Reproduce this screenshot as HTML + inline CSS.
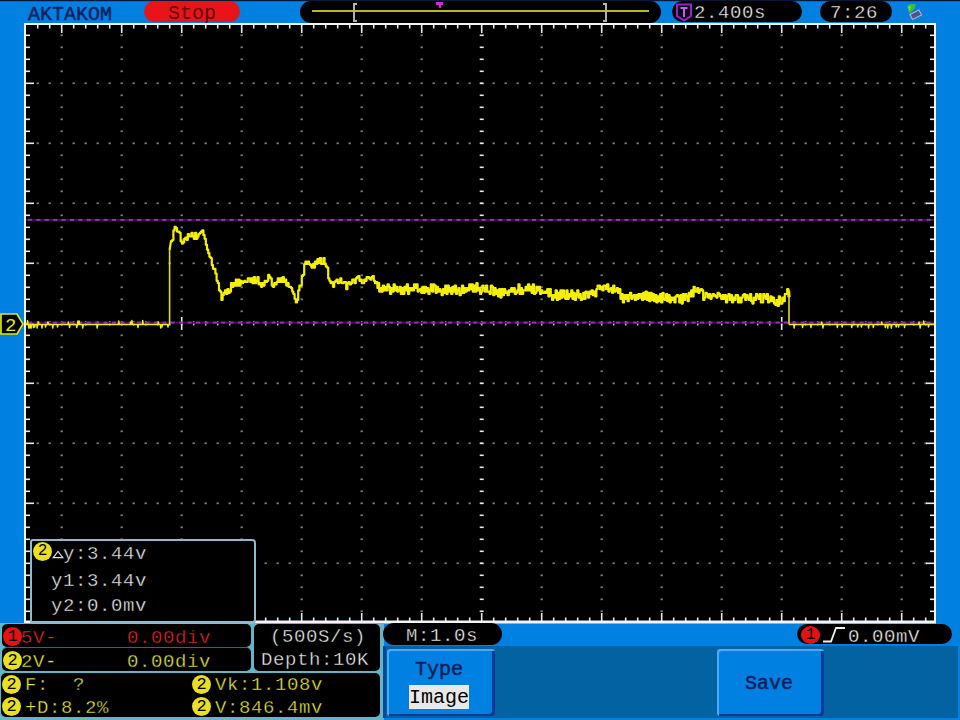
<!DOCTYPE html>
<html><head><meta charset="utf-8"><style>
html,body{margin:0;padding:0}
body{width:960px;height:720px;background:#0080e0;position:relative;overflow:hidden;font-family:"Liberation Mono",monospace;font-size:20px;line-height:1}
.a{position:absolute;white-space:pre}
.t{font-size:19px;letter-spacing:0.6px;-webkit-text-stroke:0.35px #000}
.tb{font-size:20px;letter-spacing:0px;-webkit-text-stroke:0.5px #0a1e5a}
.tr{font-size:20px;letter-spacing:0px}
.tg{font-size:20px;letter-spacing:0px}
.pill{position:absolute;background:#000;border-radius:11px}
</style></head><body>
<svg width="960" height="720" style="position:absolute;left:0;top:0"><rect x="24" y="23" width="912" height="600" fill="#000"/><rect x="36.5" y="82.4" width="2.4" height="1.8" fill="#787878"/><rect x="48.5" y="82.4" width="2.4" height="1.8" fill="#787878"/><rect x="60.5" y="82.4" width="2.4" height="1.8" fill="#787878"/><rect x="72.5" y="82.4" width="2.4" height="1.8" fill="#787878"/><rect x="84.5" y="82.4" width="2.4" height="1.8" fill="#787878"/><rect x="96.5" y="82.4" width="2.4" height="1.8" fill="#787878"/><rect x="108.5" y="82.4" width="2.4" height="1.8" fill="#787878"/><rect x="120.5" y="82.4" width="2.4" height="1.8" fill="#787878"/><rect x="132.5" y="82.4" width="2.4" height="1.8" fill="#787878"/><rect x="144.5" y="82.4" width="2.4" height="1.8" fill="#787878"/><rect x="156.5" y="82.4" width="2.4" height="1.8" fill="#787878"/><rect x="168.5" y="82.4" width="2.4" height="1.8" fill="#787878"/><rect x="180.5" y="82.4" width="2.4" height="1.8" fill="#787878"/><rect x="192.5" y="82.4" width="2.4" height="1.8" fill="#787878"/><rect x="204.5" y="82.4" width="2.4" height="1.8" fill="#787878"/><rect x="216.5" y="82.4" width="2.4" height="1.8" fill="#787878"/><rect x="228.5" y="82.4" width="2.4" height="1.8" fill="#787878"/><rect x="240.5" y="82.4" width="2.4" height="1.8" fill="#787878"/><rect x="252.5" y="82.4" width="2.4" height="1.8" fill="#787878"/><rect x="264.5" y="82.4" width="2.4" height="1.8" fill="#787878"/><rect x="276.5" y="82.4" width="2.4" height="1.8" fill="#787878"/><rect x="288.5" y="82.4" width="2.4" height="1.8" fill="#787878"/><rect x="300.5" y="82.4" width="2.4" height="1.8" fill="#787878"/><rect x="312.5" y="82.4" width="2.4" height="1.8" fill="#787878"/><rect x="324.5" y="82.4" width="2.4" height="1.8" fill="#787878"/><rect x="336.5" y="82.4" width="2.4" height="1.8" fill="#787878"/><rect x="348.5" y="82.4" width="2.4" height="1.8" fill="#787878"/><rect x="360.5" y="82.4" width="2.4" height="1.8" fill="#787878"/><rect x="372.5" y="82.4" width="2.4" height="1.8" fill="#787878"/><rect x="384.5" y="82.4" width="2.4" height="1.8" fill="#787878"/><rect x="396.5" y="82.4" width="2.4" height="1.8" fill="#787878"/><rect x="408.5" y="82.4" width="2.4" height="1.8" fill="#787878"/><rect x="420.5" y="82.4" width="2.4" height="1.8" fill="#787878"/><rect x="432.5" y="82.4" width="2.4" height="1.8" fill="#787878"/><rect x="444.5" y="82.4" width="2.4" height="1.8" fill="#787878"/><rect x="456.5" y="82.4" width="2.4" height="1.8" fill="#787878"/><rect x="468.5" y="82.4" width="2.4" height="1.8" fill="#787878"/><rect x="480.5" y="82.4" width="2.4" height="1.8" fill="#787878"/><rect x="492.5" y="82.4" width="2.4" height="1.8" fill="#787878"/><rect x="504.5" y="82.4" width="2.4" height="1.8" fill="#787878"/><rect x="516.5" y="82.4" width="2.4" height="1.8" fill="#787878"/><rect x="528.5" y="82.4" width="2.4" height="1.8" fill="#787878"/><rect x="540.5" y="82.4" width="2.4" height="1.8" fill="#787878"/><rect x="552.5" y="82.4" width="2.4" height="1.8" fill="#787878"/><rect x="564.5" y="82.4" width="2.4" height="1.8" fill="#787878"/><rect x="576.5" y="82.4" width="2.4" height="1.8" fill="#787878"/><rect x="588.5" y="82.4" width="2.4" height="1.8" fill="#787878"/><rect x="600.5" y="82.4" width="2.4" height="1.8" fill="#787878"/><rect x="612.5" y="82.4" width="2.4" height="1.8" fill="#787878"/><rect x="624.5" y="82.4" width="2.4" height="1.8" fill="#787878"/><rect x="636.5" y="82.4" width="2.4" height="1.8" fill="#787878"/><rect x="648.5" y="82.4" width="2.4" height="1.8" fill="#787878"/><rect x="660.5" y="82.4" width="2.4" height="1.8" fill="#787878"/><rect x="672.5" y="82.4" width="2.4" height="1.8" fill="#787878"/><rect x="684.5" y="82.4" width="2.4" height="1.8" fill="#787878"/><rect x="696.5" y="82.4" width="2.4" height="1.8" fill="#787878"/><rect x="708.5" y="82.4" width="2.4" height="1.8" fill="#787878"/><rect x="720.5" y="82.4" width="2.4" height="1.8" fill="#787878"/><rect x="732.5" y="82.4" width="2.4" height="1.8" fill="#787878"/><rect x="744.5" y="82.4" width="2.4" height="1.8" fill="#787878"/><rect x="756.5" y="82.4" width="2.4" height="1.8" fill="#787878"/><rect x="768.5" y="82.4" width="2.4" height="1.8" fill="#787878"/><rect x="780.5" y="82.4" width="2.4" height="1.8" fill="#787878"/><rect x="792.5" y="82.4" width="2.4" height="1.8" fill="#787878"/><rect x="804.5" y="82.4" width="2.4" height="1.8" fill="#787878"/><rect x="816.5" y="82.4" width="2.4" height="1.8" fill="#787878"/><rect x="828.5" y="82.4" width="2.4" height="1.8" fill="#787878"/><rect x="840.5" y="82.4" width="2.4" height="1.8" fill="#787878"/><rect x="852.5" y="82.4" width="2.4" height="1.8" fill="#787878"/><rect x="864.5" y="82.4" width="2.4" height="1.8" fill="#787878"/><rect x="876.5" y="82.4" width="2.4" height="1.8" fill="#787878"/><rect x="888.5" y="82.4" width="2.4" height="1.8" fill="#787878"/><rect x="900.5" y="82.4" width="2.4" height="1.8" fill="#787878"/><rect x="912.5" y="82.4" width="2.4" height="1.8" fill="#787878"/><rect x="924.5" y="82.4" width="2.4" height="1.8" fill="#787878"/><rect x="36.5" y="142.4" width="2.4" height="1.8" fill="#787878"/><rect x="48.5" y="142.4" width="2.4" height="1.8" fill="#787878"/><rect x="60.5" y="142.4" width="2.4" height="1.8" fill="#787878"/><rect x="72.5" y="142.4" width="2.4" height="1.8" fill="#787878"/><rect x="84.5" y="142.4" width="2.4" height="1.8" fill="#787878"/><rect x="96.5" y="142.4" width="2.4" height="1.8" fill="#787878"/><rect x="108.5" y="142.4" width="2.4" height="1.8" fill="#787878"/><rect x="120.5" y="142.4" width="2.4" height="1.8" fill="#787878"/><rect x="132.5" y="142.4" width="2.4" height="1.8" fill="#787878"/><rect x="144.5" y="142.4" width="2.4" height="1.8" fill="#787878"/><rect x="156.5" y="142.4" width="2.4" height="1.8" fill="#787878"/><rect x="168.5" y="142.4" width="2.4" height="1.8" fill="#787878"/><rect x="180.5" y="142.4" width="2.4" height="1.8" fill="#787878"/><rect x="192.5" y="142.4" width="2.4" height="1.8" fill="#787878"/><rect x="204.5" y="142.4" width="2.4" height="1.8" fill="#787878"/><rect x="216.5" y="142.4" width="2.4" height="1.8" fill="#787878"/><rect x="228.5" y="142.4" width="2.4" height="1.8" fill="#787878"/><rect x="240.5" y="142.4" width="2.4" height="1.8" fill="#787878"/><rect x="252.5" y="142.4" width="2.4" height="1.8" fill="#787878"/><rect x="264.5" y="142.4" width="2.4" height="1.8" fill="#787878"/><rect x="276.5" y="142.4" width="2.4" height="1.8" fill="#787878"/><rect x="288.5" y="142.4" width="2.4" height="1.8" fill="#787878"/><rect x="300.5" y="142.4" width="2.4" height="1.8" fill="#787878"/><rect x="312.5" y="142.4" width="2.4" height="1.8" fill="#787878"/><rect x="324.5" y="142.4" width="2.4" height="1.8" fill="#787878"/><rect x="336.5" y="142.4" width="2.4" height="1.8" fill="#787878"/><rect x="348.5" y="142.4" width="2.4" height="1.8" fill="#787878"/><rect x="360.5" y="142.4" width="2.4" height="1.8" fill="#787878"/><rect x="372.5" y="142.4" width="2.4" height="1.8" fill="#787878"/><rect x="384.5" y="142.4" width="2.4" height="1.8" fill="#787878"/><rect x="396.5" y="142.4" width="2.4" height="1.8" fill="#787878"/><rect x="408.5" y="142.4" width="2.4" height="1.8" fill="#787878"/><rect x="420.5" y="142.4" width="2.4" height="1.8" fill="#787878"/><rect x="432.5" y="142.4" width="2.4" height="1.8" fill="#787878"/><rect x="444.5" y="142.4" width="2.4" height="1.8" fill="#787878"/><rect x="456.5" y="142.4" width="2.4" height="1.8" fill="#787878"/><rect x="468.5" y="142.4" width="2.4" height="1.8" fill="#787878"/><rect x="480.5" y="142.4" width="2.4" height="1.8" fill="#787878"/><rect x="492.5" y="142.4" width="2.4" height="1.8" fill="#787878"/><rect x="504.5" y="142.4" width="2.4" height="1.8" fill="#787878"/><rect x="516.5" y="142.4" width="2.4" height="1.8" fill="#787878"/><rect x="528.5" y="142.4" width="2.4" height="1.8" fill="#787878"/><rect x="540.5" y="142.4" width="2.4" height="1.8" fill="#787878"/><rect x="552.5" y="142.4" width="2.4" height="1.8" fill="#787878"/><rect x="564.5" y="142.4" width="2.4" height="1.8" fill="#787878"/><rect x="576.5" y="142.4" width="2.4" height="1.8" fill="#787878"/><rect x="588.5" y="142.4" width="2.4" height="1.8" fill="#787878"/><rect x="600.5" y="142.4" width="2.4" height="1.8" fill="#787878"/><rect x="612.5" y="142.4" width="2.4" height="1.8" fill="#787878"/><rect x="624.5" y="142.4" width="2.4" height="1.8" fill="#787878"/><rect x="636.5" y="142.4" width="2.4" height="1.8" fill="#787878"/><rect x="648.5" y="142.4" width="2.4" height="1.8" fill="#787878"/><rect x="660.5" y="142.4" width="2.4" height="1.8" fill="#787878"/><rect x="672.5" y="142.4" width="2.4" height="1.8" fill="#787878"/><rect x="684.5" y="142.4" width="2.4" height="1.8" fill="#787878"/><rect x="696.5" y="142.4" width="2.4" height="1.8" fill="#787878"/><rect x="708.5" y="142.4" width="2.4" height="1.8" fill="#787878"/><rect x="720.5" y="142.4" width="2.4" height="1.8" fill="#787878"/><rect x="732.5" y="142.4" width="2.4" height="1.8" fill="#787878"/><rect x="744.5" y="142.4" width="2.4" height="1.8" fill="#787878"/><rect x="756.5" y="142.4" width="2.4" height="1.8" fill="#787878"/><rect x="768.5" y="142.4" width="2.4" height="1.8" fill="#787878"/><rect x="780.5" y="142.4" width="2.4" height="1.8" fill="#787878"/><rect x="792.5" y="142.4" width="2.4" height="1.8" fill="#787878"/><rect x="804.5" y="142.4" width="2.4" height="1.8" fill="#787878"/><rect x="816.5" y="142.4" width="2.4" height="1.8" fill="#787878"/><rect x="828.5" y="142.4" width="2.4" height="1.8" fill="#787878"/><rect x="840.5" y="142.4" width="2.4" height="1.8" fill="#787878"/><rect x="852.5" y="142.4" width="2.4" height="1.8" fill="#787878"/><rect x="864.5" y="142.4" width="2.4" height="1.8" fill="#787878"/><rect x="876.5" y="142.4" width="2.4" height="1.8" fill="#787878"/><rect x="888.5" y="142.4" width="2.4" height="1.8" fill="#787878"/><rect x="900.5" y="142.4" width="2.4" height="1.8" fill="#787878"/><rect x="912.5" y="142.4" width="2.4" height="1.8" fill="#787878"/><rect x="924.5" y="142.4" width="2.4" height="1.8" fill="#787878"/><rect x="36.5" y="202.4" width="2.4" height="1.8" fill="#787878"/><rect x="48.5" y="202.4" width="2.4" height="1.8" fill="#787878"/><rect x="60.5" y="202.4" width="2.4" height="1.8" fill="#787878"/><rect x="72.5" y="202.4" width="2.4" height="1.8" fill="#787878"/><rect x="84.5" y="202.4" width="2.4" height="1.8" fill="#787878"/><rect x="96.5" y="202.4" width="2.4" height="1.8" fill="#787878"/><rect x="108.5" y="202.4" width="2.4" height="1.8" fill="#787878"/><rect x="120.5" y="202.4" width="2.4" height="1.8" fill="#787878"/><rect x="132.5" y="202.4" width="2.4" height="1.8" fill="#787878"/><rect x="144.5" y="202.4" width="2.4" height="1.8" fill="#787878"/><rect x="156.5" y="202.4" width="2.4" height="1.8" fill="#787878"/><rect x="168.5" y="202.4" width="2.4" height="1.8" fill="#787878"/><rect x="180.5" y="202.4" width="2.4" height="1.8" fill="#787878"/><rect x="192.5" y="202.4" width="2.4" height="1.8" fill="#787878"/><rect x="204.5" y="202.4" width="2.4" height="1.8" fill="#787878"/><rect x="216.5" y="202.4" width="2.4" height="1.8" fill="#787878"/><rect x="228.5" y="202.4" width="2.4" height="1.8" fill="#787878"/><rect x="240.5" y="202.4" width="2.4" height="1.8" fill="#787878"/><rect x="252.5" y="202.4" width="2.4" height="1.8" fill="#787878"/><rect x="264.5" y="202.4" width="2.4" height="1.8" fill="#787878"/><rect x="276.5" y="202.4" width="2.4" height="1.8" fill="#787878"/><rect x="288.5" y="202.4" width="2.4" height="1.8" fill="#787878"/><rect x="300.5" y="202.4" width="2.4" height="1.8" fill="#787878"/><rect x="312.5" y="202.4" width="2.4" height="1.8" fill="#787878"/><rect x="324.5" y="202.4" width="2.4" height="1.8" fill="#787878"/><rect x="336.5" y="202.4" width="2.4" height="1.8" fill="#787878"/><rect x="348.5" y="202.4" width="2.4" height="1.8" fill="#787878"/><rect x="360.5" y="202.4" width="2.4" height="1.8" fill="#787878"/><rect x="372.5" y="202.4" width="2.4" height="1.8" fill="#787878"/><rect x="384.5" y="202.4" width="2.4" height="1.8" fill="#787878"/><rect x="396.5" y="202.4" width="2.4" height="1.8" fill="#787878"/><rect x="408.5" y="202.4" width="2.4" height="1.8" fill="#787878"/><rect x="420.5" y="202.4" width="2.4" height="1.8" fill="#787878"/><rect x="432.5" y="202.4" width="2.4" height="1.8" fill="#787878"/><rect x="444.5" y="202.4" width="2.4" height="1.8" fill="#787878"/><rect x="456.5" y="202.4" width="2.4" height="1.8" fill="#787878"/><rect x="468.5" y="202.4" width="2.4" height="1.8" fill="#787878"/><rect x="480.5" y="202.4" width="2.4" height="1.8" fill="#787878"/><rect x="492.5" y="202.4" width="2.4" height="1.8" fill="#787878"/><rect x="504.5" y="202.4" width="2.4" height="1.8" fill="#787878"/><rect x="516.5" y="202.4" width="2.4" height="1.8" fill="#787878"/><rect x="528.5" y="202.4" width="2.4" height="1.8" fill="#787878"/><rect x="540.5" y="202.4" width="2.4" height="1.8" fill="#787878"/><rect x="552.5" y="202.4" width="2.4" height="1.8" fill="#787878"/><rect x="564.5" y="202.4" width="2.4" height="1.8" fill="#787878"/><rect x="576.5" y="202.4" width="2.4" height="1.8" fill="#787878"/><rect x="588.5" y="202.4" width="2.4" height="1.8" fill="#787878"/><rect x="600.5" y="202.4" width="2.4" height="1.8" fill="#787878"/><rect x="612.5" y="202.4" width="2.4" height="1.8" fill="#787878"/><rect x="624.5" y="202.4" width="2.4" height="1.8" fill="#787878"/><rect x="636.5" y="202.4" width="2.4" height="1.8" fill="#787878"/><rect x="648.5" y="202.4" width="2.4" height="1.8" fill="#787878"/><rect x="660.5" y="202.4" width="2.4" height="1.8" fill="#787878"/><rect x="672.5" y="202.4" width="2.4" height="1.8" fill="#787878"/><rect x="684.5" y="202.4" width="2.4" height="1.8" fill="#787878"/><rect x="696.5" y="202.4" width="2.4" height="1.8" fill="#787878"/><rect x="708.5" y="202.4" width="2.4" height="1.8" fill="#787878"/><rect x="720.5" y="202.4" width="2.4" height="1.8" fill="#787878"/><rect x="732.5" y="202.4" width="2.4" height="1.8" fill="#787878"/><rect x="744.5" y="202.4" width="2.4" height="1.8" fill="#787878"/><rect x="756.5" y="202.4" width="2.4" height="1.8" fill="#787878"/><rect x="768.5" y="202.4" width="2.4" height="1.8" fill="#787878"/><rect x="780.5" y="202.4" width="2.4" height="1.8" fill="#787878"/><rect x="792.5" y="202.4" width="2.4" height="1.8" fill="#787878"/><rect x="804.5" y="202.4" width="2.4" height="1.8" fill="#787878"/><rect x="816.5" y="202.4" width="2.4" height="1.8" fill="#787878"/><rect x="828.5" y="202.4" width="2.4" height="1.8" fill="#787878"/><rect x="840.5" y="202.4" width="2.4" height="1.8" fill="#787878"/><rect x="852.5" y="202.4" width="2.4" height="1.8" fill="#787878"/><rect x="864.5" y="202.4" width="2.4" height="1.8" fill="#787878"/><rect x="876.5" y="202.4" width="2.4" height="1.8" fill="#787878"/><rect x="888.5" y="202.4" width="2.4" height="1.8" fill="#787878"/><rect x="900.5" y="202.4" width="2.4" height="1.8" fill="#787878"/><rect x="912.5" y="202.4" width="2.4" height="1.8" fill="#787878"/><rect x="924.5" y="202.4" width="2.4" height="1.8" fill="#787878"/><rect x="36.5" y="262.4" width="2.4" height="1.8" fill="#787878"/><rect x="48.5" y="262.4" width="2.4" height="1.8" fill="#787878"/><rect x="60.5" y="262.4" width="2.4" height="1.8" fill="#787878"/><rect x="72.5" y="262.4" width="2.4" height="1.8" fill="#787878"/><rect x="84.5" y="262.4" width="2.4" height="1.8" fill="#787878"/><rect x="96.5" y="262.4" width="2.4" height="1.8" fill="#787878"/><rect x="108.5" y="262.4" width="2.4" height="1.8" fill="#787878"/><rect x="120.5" y="262.4" width="2.4" height="1.8" fill="#787878"/><rect x="132.5" y="262.4" width="2.4" height="1.8" fill="#787878"/><rect x="144.5" y="262.4" width="2.4" height="1.8" fill="#787878"/><rect x="156.5" y="262.4" width="2.4" height="1.8" fill="#787878"/><rect x="168.5" y="262.4" width="2.4" height="1.8" fill="#787878"/><rect x="180.5" y="262.4" width="2.4" height="1.8" fill="#787878"/><rect x="192.5" y="262.4" width="2.4" height="1.8" fill="#787878"/><rect x="204.5" y="262.4" width="2.4" height="1.8" fill="#787878"/><rect x="216.5" y="262.4" width="2.4" height="1.8" fill="#787878"/><rect x="228.5" y="262.4" width="2.4" height="1.8" fill="#787878"/><rect x="240.5" y="262.4" width="2.4" height="1.8" fill="#787878"/><rect x="252.5" y="262.4" width="2.4" height="1.8" fill="#787878"/><rect x="264.5" y="262.4" width="2.4" height="1.8" fill="#787878"/><rect x="276.5" y="262.4" width="2.4" height="1.8" fill="#787878"/><rect x="288.5" y="262.4" width="2.4" height="1.8" fill="#787878"/><rect x="300.5" y="262.4" width="2.4" height="1.8" fill="#787878"/><rect x="312.5" y="262.4" width="2.4" height="1.8" fill="#787878"/><rect x="324.5" y="262.4" width="2.4" height="1.8" fill="#787878"/><rect x="336.5" y="262.4" width="2.4" height="1.8" fill="#787878"/><rect x="348.5" y="262.4" width="2.4" height="1.8" fill="#787878"/><rect x="360.5" y="262.4" width="2.4" height="1.8" fill="#787878"/><rect x="372.5" y="262.4" width="2.4" height="1.8" fill="#787878"/><rect x="384.5" y="262.4" width="2.4" height="1.8" fill="#787878"/><rect x="396.5" y="262.4" width="2.4" height="1.8" fill="#787878"/><rect x="408.5" y="262.4" width="2.4" height="1.8" fill="#787878"/><rect x="420.5" y="262.4" width="2.4" height="1.8" fill="#787878"/><rect x="432.5" y="262.4" width="2.4" height="1.8" fill="#787878"/><rect x="444.5" y="262.4" width="2.4" height="1.8" fill="#787878"/><rect x="456.5" y="262.4" width="2.4" height="1.8" fill="#787878"/><rect x="468.5" y="262.4" width="2.4" height="1.8" fill="#787878"/><rect x="480.5" y="262.4" width="2.4" height="1.8" fill="#787878"/><rect x="492.5" y="262.4" width="2.4" height="1.8" fill="#787878"/><rect x="504.5" y="262.4" width="2.4" height="1.8" fill="#787878"/><rect x="516.5" y="262.4" width="2.4" height="1.8" fill="#787878"/><rect x="528.5" y="262.4" width="2.4" height="1.8" fill="#787878"/><rect x="540.5" y="262.4" width="2.4" height="1.8" fill="#787878"/><rect x="552.5" y="262.4" width="2.4" height="1.8" fill="#787878"/><rect x="564.5" y="262.4" width="2.4" height="1.8" fill="#787878"/><rect x="576.5" y="262.4" width="2.4" height="1.8" fill="#787878"/><rect x="588.5" y="262.4" width="2.4" height="1.8" fill="#787878"/><rect x="600.5" y="262.4" width="2.4" height="1.8" fill="#787878"/><rect x="612.5" y="262.4" width="2.4" height="1.8" fill="#787878"/><rect x="624.5" y="262.4" width="2.4" height="1.8" fill="#787878"/><rect x="636.5" y="262.4" width="2.4" height="1.8" fill="#787878"/><rect x="648.5" y="262.4" width="2.4" height="1.8" fill="#787878"/><rect x="660.5" y="262.4" width="2.4" height="1.8" fill="#787878"/><rect x="672.5" y="262.4" width="2.4" height="1.8" fill="#787878"/><rect x="684.5" y="262.4" width="2.4" height="1.8" fill="#787878"/><rect x="696.5" y="262.4" width="2.4" height="1.8" fill="#787878"/><rect x="708.5" y="262.4" width="2.4" height="1.8" fill="#787878"/><rect x="720.5" y="262.4" width="2.4" height="1.8" fill="#787878"/><rect x="732.5" y="262.4" width="2.4" height="1.8" fill="#787878"/><rect x="744.5" y="262.4" width="2.4" height="1.8" fill="#787878"/><rect x="756.5" y="262.4" width="2.4" height="1.8" fill="#787878"/><rect x="768.5" y="262.4" width="2.4" height="1.8" fill="#787878"/><rect x="780.5" y="262.4" width="2.4" height="1.8" fill="#787878"/><rect x="792.5" y="262.4" width="2.4" height="1.8" fill="#787878"/><rect x="804.5" y="262.4" width="2.4" height="1.8" fill="#787878"/><rect x="816.5" y="262.4" width="2.4" height="1.8" fill="#787878"/><rect x="828.5" y="262.4" width="2.4" height="1.8" fill="#787878"/><rect x="840.5" y="262.4" width="2.4" height="1.8" fill="#787878"/><rect x="852.5" y="262.4" width="2.4" height="1.8" fill="#787878"/><rect x="864.5" y="262.4" width="2.4" height="1.8" fill="#787878"/><rect x="876.5" y="262.4" width="2.4" height="1.8" fill="#787878"/><rect x="888.5" y="262.4" width="2.4" height="1.8" fill="#787878"/><rect x="900.5" y="262.4" width="2.4" height="1.8" fill="#787878"/><rect x="912.5" y="262.4" width="2.4" height="1.8" fill="#787878"/><rect x="924.5" y="262.4" width="2.4" height="1.8" fill="#787878"/><rect x="36.5" y="382.4" width="2.4" height="1.8" fill="#787878"/><rect x="48.5" y="382.4" width="2.4" height="1.8" fill="#787878"/><rect x="60.5" y="382.4" width="2.4" height="1.8" fill="#787878"/><rect x="72.5" y="382.4" width="2.4" height="1.8" fill="#787878"/><rect x="84.5" y="382.4" width="2.4" height="1.8" fill="#787878"/><rect x="96.5" y="382.4" width="2.4" height="1.8" fill="#787878"/><rect x="108.5" y="382.4" width="2.4" height="1.8" fill="#787878"/><rect x="120.5" y="382.4" width="2.4" height="1.8" fill="#787878"/><rect x="132.5" y="382.4" width="2.4" height="1.8" fill="#787878"/><rect x="144.5" y="382.4" width="2.4" height="1.8" fill="#787878"/><rect x="156.5" y="382.4" width="2.4" height="1.8" fill="#787878"/><rect x="168.5" y="382.4" width="2.4" height="1.8" fill="#787878"/><rect x="180.5" y="382.4" width="2.4" height="1.8" fill="#787878"/><rect x="192.5" y="382.4" width="2.4" height="1.8" fill="#787878"/><rect x="204.5" y="382.4" width="2.4" height="1.8" fill="#787878"/><rect x="216.5" y="382.4" width="2.4" height="1.8" fill="#787878"/><rect x="228.5" y="382.4" width="2.4" height="1.8" fill="#787878"/><rect x="240.5" y="382.4" width="2.4" height="1.8" fill="#787878"/><rect x="252.5" y="382.4" width="2.4" height="1.8" fill="#787878"/><rect x="264.5" y="382.4" width="2.4" height="1.8" fill="#787878"/><rect x="276.5" y="382.4" width="2.4" height="1.8" fill="#787878"/><rect x="288.5" y="382.4" width="2.4" height="1.8" fill="#787878"/><rect x="300.5" y="382.4" width="2.4" height="1.8" fill="#787878"/><rect x="312.5" y="382.4" width="2.4" height="1.8" fill="#787878"/><rect x="324.5" y="382.4" width="2.4" height="1.8" fill="#787878"/><rect x="336.5" y="382.4" width="2.4" height="1.8" fill="#787878"/><rect x="348.5" y="382.4" width="2.4" height="1.8" fill="#787878"/><rect x="360.5" y="382.4" width="2.4" height="1.8" fill="#787878"/><rect x="372.5" y="382.4" width="2.4" height="1.8" fill="#787878"/><rect x="384.5" y="382.4" width="2.4" height="1.8" fill="#787878"/><rect x="396.5" y="382.4" width="2.4" height="1.8" fill="#787878"/><rect x="408.5" y="382.4" width="2.4" height="1.8" fill="#787878"/><rect x="420.5" y="382.4" width="2.4" height="1.8" fill="#787878"/><rect x="432.5" y="382.4" width="2.4" height="1.8" fill="#787878"/><rect x="444.5" y="382.4" width="2.4" height="1.8" fill="#787878"/><rect x="456.5" y="382.4" width="2.4" height="1.8" fill="#787878"/><rect x="468.5" y="382.4" width="2.4" height="1.8" fill="#787878"/><rect x="480.5" y="382.4" width="2.4" height="1.8" fill="#787878"/><rect x="492.5" y="382.4" width="2.4" height="1.8" fill="#787878"/><rect x="504.5" y="382.4" width="2.4" height="1.8" fill="#787878"/><rect x="516.5" y="382.4" width="2.4" height="1.8" fill="#787878"/><rect x="528.5" y="382.4" width="2.4" height="1.8" fill="#787878"/><rect x="540.5" y="382.4" width="2.4" height="1.8" fill="#787878"/><rect x="552.5" y="382.4" width="2.4" height="1.8" fill="#787878"/><rect x="564.5" y="382.4" width="2.4" height="1.8" fill="#787878"/><rect x="576.5" y="382.4" width="2.4" height="1.8" fill="#787878"/><rect x="588.5" y="382.4" width="2.4" height="1.8" fill="#787878"/><rect x="600.5" y="382.4" width="2.4" height="1.8" fill="#787878"/><rect x="612.5" y="382.4" width="2.4" height="1.8" fill="#787878"/><rect x="624.5" y="382.4" width="2.4" height="1.8" fill="#787878"/><rect x="636.5" y="382.4" width="2.4" height="1.8" fill="#787878"/><rect x="648.5" y="382.4" width="2.4" height="1.8" fill="#787878"/><rect x="660.5" y="382.4" width="2.4" height="1.8" fill="#787878"/><rect x="672.5" y="382.4" width="2.4" height="1.8" fill="#787878"/><rect x="684.5" y="382.4" width="2.4" height="1.8" fill="#787878"/><rect x="696.5" y="382.4" width="2.4" height="1.8" fill="#787878"/><rect x="708.5" y="382.4" width="2.4" height="1.8" fill="#787878"/><rect x="720.5" y="382.4" width="2.4" height="1.8" fill="#787878"/><rect x="732.5" y="382.4" width="2.4" height="1.8" fill="#787878"/><rect x="744.5" y="382.4" width="2.4" height="1.8" fill="#787878"/><rect x="756.5" y="382.4" width="2.4" height="1.8" fill="#787878"/><rect x="768.5" y="382.4" width="2.4" height="1.8" fill="#787878"/><rect x="780.5" y="382.4" width="2.4" height="1.8" fill="#787878"/><rect x="792.5" y="382.4" width="2.4" height="1.8" fill="#787878"/><rect x="804.5" y="382.4" width="2.4" height="1.8" fill="#787878"/><rect x="816.5" y="382.4" width="2.4" height="1.8" fill="#787878"/><rect x="828.5" y="382.4" width="2.4" height="1.8" fill="#787878"/><rect x="840.5" y="382.4" width="2.4" height="1.8" fill="#787878"/><rect x="852.5" y="382.4" width="2.4" height="1.8" fill="#787878"/><rect x="864.5" y="382.4" width="2.4" height="1.8" fill="#787878"/><rect x="876.5" y="382.4" width="2.4" height="1.8" fill="#787878"/><rect x="888.5" y="382.4" width="2.4" height="1.8" fill="#787878"/><rect x="900.5" y="382.4" width="2.4" height="1.8" fill="#787878"/><rect x="912.5" y="382.4" width="2.4" height="1.8" fill="#787878"/><rect x="924.5" y="382.4" width="2.4" height="1.8" fill="#787878"/><rect x="36.5" y="442.4" width="2.4" height="1.8" fill="#787878"/><rect x="48.5" y="442.4" width="2.4" height="1.8" fill="#787878"/><rect x="60.5" y="442.4" width="2.4" height="1.8" fill="#787878"/><rect x="72.5" y="442.4" width="2.4" height="1.8" fill="#787878"/><rect x="84.5" y="442.4" width="2.4" height="1.8" fill="#787878"/><rect x="96.5" y="442.4" width="2.4" height="1.8" fill="#787878"/><rect x="108.5" y="442.4" width="2.4" height="1.8" fill="#787878"/><rect x="120.5" y="442.4" width="2.4" height="1.8" fill="#787878"/><rect x="132.5" y="442.4" width="2.4" height="1.8" fill="#787878"/><rect x="144.5" y="442.4" width="2.4" height="1.8" fill="#787878"/><rect x="156.5" y="442.4" width="2.4" height="1.8" fill="#787878"/><rect x="168.5" y="442.4" width="2.4" height="1.8" fill="#787878"/><rect x="180.5" y="442.4" width="2.4" height="1.8" fill="#787878"/><rect x="192.5" y="442.4" width="2.4" height="1.8" fill="#787878"/><rect x="204.5" y="442.4" width="2.4" height="1.8" fill="#787878"/><rect x="216.5" y="442.4" width="2.4" height="1.8" fill="#787878"/><rect x="228.5" y="442.4" width="2.4" height="1.8" fill="#787878"/><rect x="240.5" y="442.4" width="2.4" height="1.8" fill="#787878"/><rect x="252.5" y="442.4" width="2.4" height="1.8" fill="#787878"/><rect x="264.5" y="442.4" width="2.4" height="1.8" fill="#787878"/><rect x="276.5" y="442.4" width="2.4" height="1.8" fill="#787878"/><rect x="288.5" y="442.4" width="2.4" height="1.8" fill="#787878"/><rect x="300.5" y="442.4" width="2.4" height="1.8" fill="#787878"/><rect x="312.5" y="442.4" width="2.4" height="1.8" fill="#787878"/><rect x="324.5" y="442.4" width="2.4" height="1.8" fill="#787878"/><rect x="336.5" y="442.4" width="2.4" height="1.8" fill="#787878"/><rect x="348.5" y="442.4" width="2.4" height="1.8" fill="#787878"/><rect x="360.5" y="442.4" width="2.4" height="1.8" fill="#787878"/><rect x="372.5" y="442.4" width="2.4" height="1.8" fill="#787878"/><rect x="384.5" y="442.4" width="2.4" height="1.8" fill="#787878"/><rect x="396.5" y="442.4" width="2.4" height="1.8" fill="#787878"/><rect x="408.5" y="442.4" width="2.4" height="1.8" fill="#787878"/><rect x="420.5" y="442.4" width="2.4" height="1.8" fill="#787878"/><rect x="432.5" y="442.4" width="2.4" height="1.8" fill="#787878"/><rect x="444.5" y="442.4" width="2.4" height="1.8" fill="#787878"/><rect x="456.5" y="442.4" width="2.4" height="1.8" fill="#787878"/><rect x="468.5" y="442.4" width="2.4" height="1.8" fill="#787878"/><rect x="480.5" y="442.4" width="2.4" height="1.8" fill="#787878"/><rect x="492.5" y="442.4" width="2.4" height="1.8" fill="#787878"/><rect x="504.5" y="442.4" width="2.4" height="1.8" fill="#787878"/><rect x="516.5" y="442.4" width="2.4" height="1.8" fill="#787878"/><rect x="528.5" y="442.4" width="2.4" height="1.8" fill="#787878"/><rect x="540.5" y="442.4" width="2.4" height="1.8" fill="#787878"/><rect x="552.5" y="442.4" width="2.4" height="1.8" fill="#787878"/><rect x="564.5" y="442.4" width="2.4" height="1.8" fill="#787878"/><rect x="576.5" y="442.4" width="2.4" height="1.8" fill="#787878"/><rect x="588.5" y="442.4" width="2.4" height="1.8" fill="#787878"/><rect x="600.5" y="442.4" width="2.4" height="1.8" fill="#787878"/><rect x="612.5" y="442.4" width="2.4" height="1.8" fill="#787878"/><rect x="624.5" y="442.4" width="2.4" height="1.8" fill="#787878"/><rect x="636.5" y="442.4" width="2.4" height="1.8" fill="#787878"/><rect x="648.5" y="442.4" width="2.4" height="1.8" fill="#787878"/><rect x="660.5" y="442.4" width="2.4" height="1.8" fill="#787878"/><rect x="672.5" y="442.4" width="2.4" height="1.8" fill="#787878"/><rect x="684.5" y="442.4" width="2.4" height="1.8" fill="#787878"/><rect x="696.5" y="442.4" width="2.4" height="1.8" fill="#787878"/><rect x="708.5" y="442.4" width="2.4" height="1.8" fill="#787878"/><rect x="720.5" y="442.4" width="2.4" height="1.8" fill="#787878"/><rect x="732.5" y="442.4" width="2.4" height="1.8" fill="#787878"/><rect x="744.5" y="442.4" width="2.4" height="1.8" fill="#787878"/><rect x="756.5" y="442.4" width="2.4" height="1.8" fill="#787878"/><rect x="768.5" y="442.4" width="2.4" height="1.8" fill="#787878"/><rect x="780.5" y="442.4" width="2.4" height="1.8" fill="#787878"/><rect x="792.5" y="442.4" width="2.4" height="1.8" fill="#787878"/><rect x="804.5" y="442.4" width="2.4" height="1.8" fill="#787878"/><rect x="816.5" y="442.4" width="2.4" height="1.8" fill="#787878"/><rect x="828.5" y="442.4" width="2.4" height="1.8" fill="#787878"/><rect x="840.5" y="442.4" width="2.4" height="1.8" fill="#787878"/><rect x="852.5" y="442.4" width="2.4" height="1.8" fill="#787878"/><rect x="864.5" y="442.4" width="2.4" height="1.8" fill="#787878"/><rect x="876.5" y="442.4" width="2.4" height="1.8" fill="#787878"/><rect x="888.5" y="442.4" width="2.4" height="1.8" fill="#787878"/><rect x="900.5" y="442.4" width="2.4" height="1.8" fill="#787878"/><rect x="912.5" y="442.4" width="2.4" height="1.8" fill="#787878"/><rect x="924.5" y="442.4" width="2.4" height="1.8" fill="#787878"/><rect x="36.5" y="502.4" width="2.4" height="1.8" fill="#787878"/><rect x="48.5" y="502.4" width="2.4" height="1.8" fill="#787878"/><rect x="60.5" y="502.4" width="2.4" height="1.8" fill="#787878"/><rect x="72.5" y="502.4" width="2.4" height="1.8" fill="#787878"/><rect x="84.5" y="502.4" width="2.4" height="1.8" fill="#787878"/><rect x="96.5" y="502.4" width="2.4" height="1.8" fill="#787878"/><rect x="108.5" y="502.4" width="2.4" height="1.8" fill="#787878"/><rect x="120.5" y="502.4" width="2.4" height="1.8" fill="#787878"/><rect x="132.5" y="502.4" width="2.4" height="1.8" fill="#787878"/><rect x="144.5" y="502.4" width="2.4" height="1.8" fill="#787878"/><rect x="156.5" y="502.4" width="2.4" height="1.8" fill="#787878"/><rect x="168.5" y="502.4" width="2.4" height="1.8" fill="#787878"/><rect x="180.5" y="502.4" width="2.4" height="1.8" fill="#787878"/><rect x="192.5" y="502.4" width="2.4" height="1.8" fill="#787878"/><rect x="204.5" y="502.4" width="2.4" height="1.8" fill="#787878"/><rect x="216.5" y="502.4" width="2.4" height="1.8" fill="#787878"/><rect x="228.5" y="502.4" width="2.4" height="1.8" fill="#787878"/><rect x="240.5" y="502.4" width="2.4" height="1.8" fill="#787878"/><rect x="252.5" y="502.4" width="2.4" height="1.8" fill="#787878"/><rect x="264.5" y="502.4" width="2.4" height="1.8" fill="#787878"/><rect x="276.5" y="502.4" width="2.4" height="1.8" fill="#787878"/><rect x="288.5" y="502.4" width="2.4" height="1.8" fill="#787878"/><rect x="300.5" y="502.4" width="2.4" height="1.8" fill="#787878"/><rect x="312.5" y="502.4" width="2.4" height="1.8" fill="#787878"/><rect x="324.5" y="502.4" width="2.4" height="1.8" fill="#787878"/><rect x="336.5" y="502.4" width="2.4" height="1.8" fill="#787878"/><rect x="348.5" y="502.4" width="2.4" height="1.8" fill="#787878"/><rect x="360.5" y="502.4" width="2.4" height="1.8" fill="#787878"/><rect x="372.5" y="502.4" width="2.4" height="1.8" fill="#787878"/><rect x="384.5" y="502.4" width="2.4" height="1.8" fill="#787878"/><rect x="396.5" y="502.4" width="2.4" height="1.8" fill="#787878"/><rect x="408.5" y="502.4" width="2.4" height="1.8" fill="#787878"/><rect x="420.5" y="502.4" width="2.4" height="1.8" fill="#787878"/><rect x="432.5" y="502.4" width="2.4" height="1.8" fill="#787878"/><rect x="444.5" y="502.4" width="2.4" height="1.8" fill="#787878"/><rect x="456.5" y="502.4" width="2.4" height="1.8" fill="#787878"/><rect x="468.5" y="502.4" width="2.4" height="1.8" fill="#787878"/><rect x="480.5" y="502.4" width="2.4" height="1.8" fill="#787878"/><rect x="492.5" y="502.4" width="2.4" height="1.8" fill="#787878"/><rect x="504.5" y="502.4" width="2.4" height="1.8" fill="#787878"/><rect x="516.5" y="502.4" width="2.4" height="1.8" fill="#787878"/><rect x="528.5" y="502.4" width="2.4" height="1.8" fill="#787878"/><rect x="540.5" y="502.4" width="2.4" height="1.8" fill="#787878"/><rect x="552.5" y="502.4" width="2.4" height="1.8" fill="#787878"/><rect x="564.5" y="502.4" width="2.4" height="1.8" fill="#787878"/><rect x="576.5" y="502.4" width="2.4" height="1.8" fill="#787878"/><rect x="588.5" y="502.4" width="2.4" height="1.8" fill="#787878"/><rect x="600.5" y="502.4" width="2.4" height="1.8" fill="#787878"/><rect x="612.5" y="502.4" width="2.4" height="1.8" fill="#787878"/><rect x="624.5" y="502.4" width="2.4" height="1.8" fill="#787878"/><rect x="636.5" y="502.4" width="2.4" height="1.8" fill="#787878"/><rect x="648.5" y="502.4" width="2.4" height="1.8" fill="#787878"/><rect x="660.5" y="502.4" width="2.4" height="1.8" fill="#787878"/><rect x="672.5" y="502.4" width="2.4" height="1.8" fill="#787878"/><rect x="684.5" y="502.4" width="2.4" height="1.8" fill="#787878"/><rect x="696.5" y="502.4" width="2.4" height="1.8" fill="#787878"/><rect x="708.5" y="502.4" width="2.4" height="1.8" fill="#787878"/><rect x="720.5" y="502.4" width="2.4" height="1.8" fill="#787878"/><rect x="732.5" y="502.4" width="2.4" height="1.8" fill="#787878"/><rect x="744.5" y="502.4" width="2.4" height="1.8" fill="#787878"/><rect x="756.5" y="502.4" width="2.4" height="1.8" fill="#787878"/><rect x="768.5" y="502.4" width="2.4" height="1.8" fill="#787878"/><rect x="780.5" y="502.4" width="2.4" height="1.8" fill="#787878"/><rect x="792.5" y="502.4" width="2.4" height="1.8" fill="#787878"/><rect x="804.5" y="502.4" width="2.4" height="1.8" fill="#787878"/><rect x="816.5" y="502.4" width="2.4" height="1.8" fill="#787878"/><rect x="828.5" y="502.4" width="2.4" height="1.8" fill="#787878"/><rect x="840.5" y="502.4" width="2.4" height="1.8" fill="#787878"/><rect x="852.5" y="502.4" width="2.4" height="1.8" fill="#787878"/><rect x="864.5" y="502.4" width="2.4" height="1.8" fill="#787878"/><rect x="876.5" y="502.4" width="2.4" height="1.8" fill="#787878"/><rect x="888.5" y="502.4" width="2.4" height="1.8" fill="#787878"/><rect x="900.5" y="502.4" width="2.4" height="1.8" fill="#787878"/><rect x="912.5" y="502.4" width="2.4" height="1.8" fill="#787878"/><rect x="924.5" y="502.4" width="2.4" height="1.8" fill="#787878"/><rect x="36.5" y="562.4" width="2.4" height="1.8" fill="#787878"/><rect x="48.5" y="562.4" width="2.4" height="1.8" fill="#787878"/><rect x="60.5" y="562.4" width="2.4" height="1.8" fill="#787878"/><rect x="72.5" y="562.4" width="2.4" height="1.8" fill="#787878"/><rect x="84.5" y="562.4" width="2.4" height="1.8" fill="#787878"/><rect x="96.5" y="562.4" width="2.4" height="1.8" fill="#787878"/><rect x="108.5" y="562.4" width="2.4" height="1.8" fill="#787878"/><rect x="120.5" y="562.4" width="2.4" height="1.8" fill="#787878"/><rect x="132.5" y="562.4" width="2.4" height="1.8" fill="#787878"/><rect x="144.5" y="562.4" width="2.4" height="1.8" fill="#787878"/><rect x="156.5" y="562.4" width="2.4" height="1.8" fill="#787878"/><rect x="168.5" y="562.4" width="2.4" height="1.8" fill="#787878"/><rect x="180.5" y="562.4" width="2.4" height="1.8" fill="#787878"/><rect x="192.5" y="562.4" width="2.4" height="1.8" fill="#787878"/><rect x="204.5" y="562.4" width="2.4" height="1.8" fill="#787878"/><rect x="216.5" y="562.4" width="2.4" height="1.8" fill="#787878"/><rect x="228.5" y="562.4" width="2.4" height="1.8" fill="#787878"/><rect x="240.5" y="562.4" width="2.4" height="1.8" fill="#787878"/><rect x="252.5" y="562.4" width="2.4" height="1.8" fill="#787878"/><rect x="264.5" y="562.4" width="2.4" height="1.8" fill="#787878"/><rect x="276.5" y="562.4" width="2.4" height="1.8" fill="#787878"/><rect x="288.5" y="562.4" width="2.4" height="1.8" fill="#787878"/><rect x="300.5" y="562.4" width="2.4" height="1.8" fill="#787878"/><rect x="312.5" y="562.4" width="2.4" height="1.8" fill="#787878"/><rect x="324.5" y="562.4" width="2.4" height="1.8" fill="#787878"/><rect x="336.5" y="562.4" width="2.4" height="1.8" fill="#787878"/><rect x="348.5" y="562.4" width="2.4" height="1.8" fill="#787878"/><rect x="360.5" y="562.4" width="2.4" height="1.8" fill="#787878"/><rect x="372.5" y="562.4" width="2.4" height="1.8" fill="#787878"/><rect x="384.5" y="562.4" width="2.4" height="1.8" fill="#787878"/><rect x="396.5" y="562.4" width="2.4" height="1.8" fill="#787878"/><rect x="408.5" y="562.4" width="2.4" height="1.8" fill="#787878"/><rect x="420.5" y="562.4" width="2.4" height="1.8" fill="#787878"/><rect x="432.5" y="562.4" width="2.4" height="1.8" fill="#787878"/><rect x="444.5" y="562.4" width="2.4" height="1.8" fill="#787878"/><rect x="456.5" y="562.4" width="2.4" height="1.8" fill="#787878"/><rect x="468.5" y="562.4" width="2.4" height="1.8" fill="#787878"/><rect x="480.5" y="562.4" width="2.4" height="1.8" fill="#787878"/><rect x="492.5" y="562.4" width="2.4" height="1.8" fill="#787878"/><rect x="504.5" y="562.4" width="2.4" height="1.8" fill="#787878"/><rect x="516.5" y="562.4" width="2.4" height="1.8" fill="#787878"/><rect x="528.5" y="562.4" width="2.4" height="1.8" fill="#787878"/><rect x="540.5" y="562.4" width="2.4" height="1.8" fill="#787878"/><rect x="552.5" y="562.4" width="2.4" height="1.8" fill="#787878"/><rect x="564.5" y="562.4" width="2.4" height="1.8" fill="#787878"/><rect x="576.5" y="562.4" width="2.4" height="1.8" fill="#787878"/><rect x="588.5" y="562.4" width="2.4" height="1.8" fill="#787878"/><rect x="600.5" y="562.4" width="2.4" height="1.8" fill="#787878"/><rect x="612.5" y="562.4" width="2.4" height="1.8" fill="#787878"/><rect x="624.5" y="562.4" width="2.4" height="1.8" fill="#787878"/><rect x="636.5" y="562.4" width="2.4" height="1.8" fill="#787878"/><rect x="648.5" y="562.4" width="2.4" height="1.8" fill="#787878"/><rect x="660.5" y="562.4" width="2.4" height="1.8" fill="#787878"/><rect x="672.5" y="562.4" width="2.4" height="1.8" fill="#787878"/><rect x="684.5" y="562.4" width="2.4" height="1.8" fill="#787878"/><rect x="696.5" y="562.4" width="2.4" height="1.8" fill="#787878"/><rect x="708.5" y="562.4" width="2.4" height="1.8" fill="#787878"/><rect x="720.5" y="562.4" width="2.4" height="1.8" fill="#787878"/><rect x="732.5" y="562.4" width="2.4" height="1.8" fill="#787878"/><rect x="744.5" y="562.4" width="2.4" height="1.8" fill="#787878"/><rect x="756.5" y="562.4" width="2.4" height="1.8" fill="#787878"/><rect x="768.5" y="562.4" width="2.4" height="1.8" fill="#787878"/><rect x="780.5" y="562.4" width="2.4" height="1.8" fill="#787878"/><rect x="792.5" y="562.4" width="2.4" height="1.8" fill="#787878"/><rect x="804.5" y="562.4" width="2.4" height="1.8" fill="#787878"/><rect x="816.5" y="562.4" width="2.4" height="1.8" fill="#787878"/><rect x="828.5" y="562.4" width="2.4" height="1.8" fill="#787878"/><rect x="840.5" y="562.4" width="2.4" height="1.8" fill="#787878"/><rect x="852.5" y="562.4" width="2.4" height="1.8" fill="#787878"/><rect x="864.5" y="562.4" width="2.4" height="1.8" fill="#787878"/><rect x="876.5" y="562.4" width="2.4" height="1.8" fill="#787878"/><rect x="888.5" y="562.4" width="2.4" height="1.8" fill="#787878"/><rect x="900.5" y="562.4" width="2.4" height="1.8" fill="#787878"/><rect x="912.5" y="562.4" width="2.4" height="1.8" fill="#787878"/><rect x="924.5" y="562.4" width="2.4" height="1.8" fill="#787878"/><rect x="60.5" y="34.4" width="2.4" height="1.8" fill="#787878"/><rect x="60.5" y="46.4" width="2.4" height="1.8" fill="#787878"/><rect x="60.5" y="58.4" width="2.4" height="1.8" fill="#787878"/><rect x="60.5" y="70.4" width="2.4" height="1.8" fill="#787878"/><rect x="60.5" y="94.4" width="2.4" height="1.8" fill="#787878"/><rect x="60.5" y="106.4" width="2.4" height="1.8" fill="#787878"/><rect x="60.5" y="118.4" width="2.4" height="1.8" fill="#787878"/><rect x="60.5" y="130.4" width="2.4" height="1.8" fill="#787878"/><rect x="60.5" y="154.4" width="2.4" height="1.8" fill="#787878"/><rect x="60.5" y="166.4" width="2.4" height="1.8" fill="#787878"/><rect x="60.5" y="178.4" width="2.4" height="1.8" fill="#787878"/><rect x="60.5" y="190.4" width="2.4" height="1.8" fill="#787878"/><rect x="60.5" y="214.4" width="2.4" height="1.8" fill="#787878"/><rect x="60.5" y="226.4" width="2.4" height="1.8" fill="#787878"/><rect x="60.5" y="238.4" width="2.4" height="1.8" fill="#787878"/><rect x="60.5" y="250.4" width="2.4" height="1.8" fill="#787878"/><rect x="60.5" y="274.4" width="2.4" height="1.8" fill="#787878"/><rect x="60.5" y="286.4" width="2.4" height="1.8" fill="#787878"/><rect x="60.5" y="298.4" width="2.4" height="1.8" fill="#787878"/><rect x="60.5" y="310.4" width="2.4" height="1.8" fill="#787878"/><rect x="60.5" y="334.4" width="2.4" height="1.8" fill="#787878"/><rect x="60.5" y="346.4" width="2.4" height="1.8" fill="#787878"/><rect x="60.5" y="358.4" width="2.4" height="1.8" fill="#787878"/><rect x="60.5" y="370.4" width="2.4" height="1.8" fill="#787878"/><rect x="60.5" y="394.4" width="2.4" height="1.8" fill="#787878"/><rect x="60.5" y="406.4" width="2.4" height="1.8" fill="#787878"/><rect x="60.5" y="418.4" width="2.4" height="1.8" fill="#787878"/><rect x="60.5" y="430.4" width="2.4" height="1.8" fill="#787878"/><rect x="60.5" y="454.4" width="2.4" height="1.8" fill="#787878"/><rect x="60.5" y="466.4" width="2.4" height="1.8" fill="#787878"/><rect x="60.5" y="478.4" width="2.4" height="1.8" fill="#787878"/><rect x="60.5" y="490.4" width="2.4" height="1.8" fill="#787878"/><rect x="60.5" y="514.4" width="2.4" height="1.8" fill="#787878"/><rect x="60.5" y="526.4" width="2.4" height="1.8" fill="#787878"/><rect x="60.5" y="538.4" width="2.4" height="1.8" fill="#787878"/><rect x="60.5" y="550.4" width="2.4" height="1.8" fill="#787878"/><rect x="60.5" y="574.4" width="2.4" height="1.8" fill="#787878"/><rect x="60.5" y="586.4" width="2.4" height="1.8" fill="#787878"/><rect x="60.5" y="598.4" width="2.4" height="1.8" fill="#787878"/><rect x="60.5" y="610.4" width="2.4" height="1.8" fill="#787878"/><rect x="120.5" y="34.4" width="2.4" height="1.8" fill="#787878"/><rect x="120.5" y="46.4" width="2.4" height="1.8" fill="#787878"/><rect x="120.5" y="58.4" width="2.4" height="1.8" fill="#787878"/><rect x="120.5" y="70.4" width="2.4" height="1.8" fill="#787878"/><rect x="120.5" y="94.4" width="2.4" height="1.8" fill="#787878"/><rect x="120.5" y="106.4" width="2.4" height="1.8" fill="#787878"/><rect x="120.5" y="118.4" width="2.4" height="1.8" fill="#787878"/><rect x="120.5" y="130.4" width="2.4" height="1.8" fill="#787878"/><rect x="120.5" y="154.4" width="2.4" height="1.8" fill="#787878"/><rect x="120.5" y="166.4" width="2.4" height="1.8" fill="#787878"/><rect x="120.5" y="178.4" width="2.4" height="1.8" fill="#787878"/><rect x="120.5" y="190.4" width="2.4" height="1.8" fill="#787878"/><rect x="120.5" y="214.4" width="2.4" height="1.8" fill="#787878"/><rect x="120.5" y="226.4" width="2.4" height="1.8" fill="#787878"/><rect x="120.5" y="238.4" width="2.4" height="1.8" fill="#787878"/><rect x="120.5" y="250.4" width="2.4" height="1.8" fill="#787878"/><rect x="120.5" y="274.4" width="2.4" height="1.8" fill="#787878"/><rect x="120.5" y="286.4" width="2.4" height="1.8" fill="#787878"/><rect x="120.5" y="298.4" width="2.4" height="1.8" fill="#787878"/><rect x="120.5" y="310.4" width="2.4" height="1.8" fill="#787878"/><rect x="120.5" y="334.4" width="2.4" height="1.8" fill="#787878"/><rect x="120.5" y="346.4" width="2.4" height="1.8" fill="#787878"/><rect x="120.5" y="358.4" width="2.4" height="1.8" fill="#787878"/><rect x="120.5" y="370.4" width="2.4" height="1.8" fill="#787878"/><rect x="120.5" y="394.4" width="2.4" height="1.8" fill="#787878"/><rect x="120.5" y="406.4" width="2.4" height="1.8" fill="#787878"/><rect x="120.5" y="418.4" width="2.4" height="1.8" fill="#787878"/><rect x="120.5" y="430.4" width="2.4" height="1.8" fill="#787878"/><rect x="120.5" y="454.4" width="2.4" height="1.8" fill="#787878"/><rect x="120.5" y="466.4" width="2.4" height="1.8" fill="#787878"/><rect x="120.5" y="478.4" width="2.4" height="1.8" fill="#787878"/><rect x="120.5" y="490.4" width="2.4" height="1.8" fill="#787878"/><rect x="120.5" y="514.4" width="2.4" height="1.8" fill="#787878"/><rect x="120.5" y="526.4" width="2.4" height="1.8" fill="#787878"/><rect x="120.5" y="538.4" width="2.4" height="1.8" fill="#787878"/><rect x="120.5" y="550.4" width="2.4" height="1.8" fill="#787878"/><rect x="120.5" y="574.4" width="2.4" height="1.8" fill="#787878"/><rect x="120.5" y="586.4" width="2.4" height="1.8" fill="#787878"/><rect x="120.5" y="598.4" width="2.4" height="1.8" fill="#787878"/><rect x="120.5" y="610.4" width="2.4" height="1.8" fill="#787878"/><rect x="180.5" y="34.4" width="2.4" height="1.8" fill="#787878"/><rect x="180.5" y="46.4" width="2.4" height="1.8" fill="#787878"/><rect x="180.5" y="58.4" width="2.4" height="1.8" fill="#787878"/><rect x="180.5" y="70.4" width="2.4" height="1.8" fill="#787878"/><rect x="180.5" y="94.4" width="2.4" height="1.8" fill="#787878"/><rect x="180.5" y="106.4" width="2.4" height="1.8" fill="#787878"/><rect x="180.5" y="118.4" width="2.4" height="1.8" fill="#787878"/><rect x="180.5" y="130.4" width="2.4" height="1.8" fill="#787878"/><rect x="180.5" y="154.4" width="2.4" height="1.8" fill="#787878"/><rect x="180.5" y="166.4" width="2.4" height="1.8" fill="#787878"/><rect x="180.5" y="178.4" width="2.4" height="1.8" fill="#787878"/><rect x="180.5" y="190.4" width="2.4" height="1.8" fill="#787878"/><rect x="180.5" y="214.4" width="2.4" height="1.8" fill="#787878"/><rect x="180.5" y="226.4" width="2.4" height="1.8" fill="#787878"/><rect x="180.5" y="238.4" width="2.4" height="1.8" fill="#787878"/><rect x="180.5" y="250.4" width="2.4" height="1.8" fill="#787878"/><rect x="180.5" y="274.4" width="2.4" height="1.8" fill="#787878"/><rect x="180.5" y="286.4" width="2.4" height="1.8" fill="#787878"/><rect x="180.5" y="298.4" width="2.4" height="1.8" fill="#787878"/><rect x="180.5" y="310.4" width="2.4" height="1.8" fill="#787878"/><rect x="180.5" y="334.4" width="2.4" height="1.8" fill="#787878"/><rect x="180.5" y="346.4" width="2.4" height="1.8" fill="#787878"/><rect x="180.5" y="358.4" width="2.4" height="1.8" fill="#787878"/><rect x="180.5" y="370.4" width="2.4" height="1.8" fill="#787878"/><rect x="180.5" y="394.4" width="2.4" height="1.8" fill="#787878"/><rect x="180.5" y="406.4" width="2.4" height="1.8" fill="#787878"/><rect x="180.5" y="418.4" width="2.4" height="1.8" fill="#787878"/><rect x="180.5" y="430.4" width="2.4" height="1.8" fill="#787878"/><rect x="180.5" y="454.4" width="2.4" height="1.8" fill="#787878"/><rect x="180.5" y="466.4" width="2.4" height="1.8" fill="#787878"/><rect x="180.5" y="478.4" width="2.4" height="1.8" fill="#787878"/><rect x="180.5" y="490.4" width="2.4" height="1.8" fill="#787878"/><rect x="180.5" y="514.4" width="2.4" height="1.8" fill="#787878"/><rect x="180.5" y="526.4" width="2.4" height="1.8" fill="#787878"/><rect x="180.5" y="538.4" width="2.4" height="1.8" fill="#787878"/><rect x="180.5" y="550.4" width="2.4" height="1.8" fill="#787878"/><rect x="180.5" y="574.4" width="2.4" height="1.8" fill="#787878"/><rect x="180.5" y="586.4" width="2.4" height="1.8" fill="#787878"/><rect x="180.5" y="598.4" width="2.4" height="1.8" fill="#787878"/><rect x="180.5" y="610.4" width="2.4" height="1.8" fill="#787878"/><rect x="240.5" y="34.4" width="2.4" height="1.8" fill="#787878"/><rect x="240.5" y="46.4" width="2.4" height="1.8" fill="#787878"/><rect x="240.5" y="58.4" width="2.4" height="1.8" fill="#787878"/><rect x="240.5" y="70.4" width="2.4" height="1.8" fill="#787878"/><rect x="240.5" y="94.4" width="2.4" height="1.8" fill="#787878"/><rect x="240.5" y="106.4" width="2.4" height="1.8" fill="#787878"/><rect x="240.5" y="118.4" width="2.4" height="1.8" fill="#787878"/><rect x="240.5" y="130.4" width="2.4" height="1.8" fill="#787878"/><rect x="240.5" y="154.4" width="2.4" height="1.8" fill="#787878"/><rect x="240.5" y="166.4" width="2.4" height="1.8" fill="#787878"/><rect x="240.5" y="178.4" width="2.4" height="1.8" fill="#787878"/><rect x="240.5" y="190.4" width="2.4" height="1.8" fill="#787878"/><rect x="240.5" y="214.4" width="2.4" height="1.8" fill="#787878"/><rect x="240.5" y="226.4" width="2.4" height="1.8" fill="#787878"/><rect x="240.5" y="238.4" width="2.4" height="1.8" fill="#787878"/><rect x="240.5" y="250.4" width="2.4" height="1.8" fill="#787878"/><rect x="240.5" y="274.4" width="2.4" height="1.8" fill="#787878"/><rect x="240.5" y="286.4" width="2.4" height="1.8" fill="#787878"/><rect x="240.5" y="298.4" width="2.4" height="1.8" fill="#787878"/><rect x="240.5" y="310.4" width="2.4" height="1.8" fill="#787878"/><rect x="240.5" y="334.4" width="2.4" height="1.8" fill="#787878"/><rect x="240.5" y="346.4" width="2.4" height="1.8" fill="#787878"/><rect x="240.5" y="358.4" width="2.4" height="1.8" fill="#787878"/><rect x="240.5" y="370.4" width="2.4" height="1.8" fill="#787878"/><rect x="240.5" y="394.4" width="2.4" height="1.8" fill="#787878"/><rect x="240.5" y="406.4" width="2.4" height="1.8" fill="#787878"/><rect x="240.5" y="418.4" width="2.4" height="1.8" fill="#787878"/><rect x="240.5" y="430.4" width="2.4" height="1.8" fill="#787878"/><rect x="240.5" y="454.4" width="2.4" height="1.8" fill="#787878"/><rect x="240.5" y="466.4" width="2.4" height="1.8" fill="#787878"/><rect x="240.5" y="478.4" width="2.4" height="1.8" fill="#787878"/><rect x="240.5" y="490.4" width="2.4" height="1.8" fill="#787878"/><rect x="240.5" y="514.4" width="2.4" height="1.8" fill="#787878"/><rect x="240.5" y="526.4" width="2.4" height="1.8" fill="#787878"/><rect x="240.5" y="538.4" width="2.4" height="1.8" fill="#787878"/><rect x="240.5" y="550.4" width="2.4" height="1.8" fill="#787878"/><rect x="240.5" y="574.4" width="2.4" height="1.8" fill="#787878"/><rect x="240.5" y="586.4" width="2.4" height="1.8" fill="#787878"/><rect x="240.5" y="598.4" width="2.4" height="1.8" fill="#787878"/><rect x="240.5" y="610.4" width="2.4" height="1.8" fill="#787878"/><rect x="300.5" y="34.4" width="2.4" height="1.8" fill="#787878"/><rect x="300.5" y="46.4" width="2.4" height="1.8" fill="#787878"/><rect x="300.5" y="58.4" width="2.4" height="1.8" fill="#787878"/><rect x="300.5" y="70.4" width="2.4" height="1.8" fill="#787878"/><rect x="300.5" y="94.4" width="2.4" height="1.8" fill="#787878"/><rect x="300.5" y="106.4" width="2.4" height="1.8" fill="#787878"/><rect x="300.5" y="118.4" width="2.4" height="1.8" fill="#787878"/><rect x="300.5" y="130.4" width="2.4" height="1.8" fill="#787878"/><rect x="300.5" y="154.4" width="2.4" height="1.8" fill="#787878"/><rect x="300.5" y="166.4" width="2.4" height="1.8" fill="#787878"/><rect x="300.5" y="178.4" width="2.4" height="1.8" fill="#787878"/><rect x="300.5" y="190.4" width="2.4" height="1.8" fill="#787878"/><rect x="300.5" y="214.4" width="2.4" height="1.8" fill="#787878"/><rect x="300.5" y="226.4" width="2.4" height="1.8" fill="#787878"/><rect x="300.5" y="238.4" width="2.4" height="1.8" fill="#787878"/><rect x="300.5" y="250.4" width="2.4" height="1.8" fill="#787878"/><rect x="300.5" y="274.4" width="2.4" height="1.8" fill="#787878"/><rect x="300.5" y="286.4" width="2.4" height="1.8" fill="#787878"/><rect x="300.5" y="298.4" width="2.4" height="1.8" fill="#787878"/><rect x="300.5" y="310.4" width="2.4" height="1.8" fill="#787878"/><rect x="300.5" y="334.4" width="2.4" height="1.8" fill="#787878"/><rect x="300.5" y="346.4" width="2.4" height="1.8" fill="#787878"/><rect x="300.5" y="358.4" width="2.4" height="1.8" fill="#787878"/><rect x="300.5" y="370.4" width="2.4" height="1.8" fill="#787878"/><rect x="300.5" y="394.4" width="2.4" height="1.8" fill="#787878"/><rect x="300.5" y="406.4" width="2.4" height="1.8" fill="#787878"/><rect x="300.5" y="418.4" width="2.4" height="1.8" fill="#787878"/><rect x="300.5" y="430.4" width="2.4" height="1.8" fill="#787878"/><rect x="300.5" y="454.4" width="2.4" height="1.8" fill="#787878"/><rect x="300.5" y="466.4" width="2.4" height="1.8" fill="#787878"/><rect x="300.5" y="478.4" width="2.4" height="1.8" fill="#787878"/><rect x="300.5" y="490.4" width="2.4" height="1.8" fill="#787878"/><rect x="300.5" y="514.4" width="2.4" height="1.8" fill="#787878"/><rect x="300.5" y="526.4" width="2.4" height="1.8" fill="#787878"/><rect x="300.5" y="538.4" width="2.4" height="1.8" fill="#787878"/><rect x="300.5" y="550.4" width="2.4" height="1.8" fill="#787878"/><rect x="300.5" y="574.4" width="2.4" height="1.8" fill="#787878"/><rect x="300.5" y="586.4" width="2.4" height="1.8" fill="#787878"/><rect x="300.5" y="598.4" width="2.4" height="1.8" fill="#787878"/><rect x="300.5" y="610.4" width="2.4" height="1.8" fill="#787878"/><rect x="360.5" y="34.4" width="2.4" height="1.8" fill="#787878"/><rect x="360.5" y="46.4" width="2.4" height="1.8" fill="#787878"/><rect x="360.5" y="58.4" width="2.4" height="1.8" fill="#787878"/><rect x="360.5" y="70.4" width="2.4" height="1.8" fill="#787878"/><rect x="360.5" y="94.4" width="2.4" height="1.8" fill="#787878"/><rect x="360.5" y="106.4" width="2.4" height="1.8" fill="#787878"/><rect x="360.5" y="118.4" width="2.4" height="1.8" fill="#787878"/><rect x="360.5" y="130.4" width="2.4" height="1.8" fill="#787878"/><rect x="360.5" y="154.4" width="2.4" height="1.8" fill="#787878"/><rect x="360.5" y="166.4" width="2.4" height="1.8" fill="#787878"/><rect x="360.5" y="178.4" width="2.4" height="1.8" fill="#787878"/><rect x="360.5" y="190.4" width="2.4" height="1.8" fill="#787878"/><rect x="360.5" y="214.4" width="2.4" height="1.8" fill="#787878"/><rect x="360.5" y="226.4" width="2.4" height="1.8" fill="#787878"/><rect x="360.5" y="238.4" width="2.4" height="1.8" fill="#787878"/><rect x="360.5" y="250.4" width="2.4" height="1.8" fill="#787878"/><rect x="360.5" y="274.4" width="2.4" height="1.8" fill="#787878"/><rect x="360.5" y="286.4" width="2.4" height="1.8" fill="#787878"/><rect x="360.5" y="298.4" width="2.4" height="1.8" fill="#787878"/><rect x="360.5" y="310.4" width="2.4" height="1.8" fill="#787878"/><rect x="360.5" y="334.4" width="2.4" height="1.8" fill="#787878"/><rect x="360.5" y="346.4" width="2.4" height="1.8" fill="#787878"/><rect x="360.5" y="358.4" width="2.4" height="1.8" fill="#787878"/><rect x="360.5" y="370.4" width="2.4" height="1.8" fill="#787878"/><rect x="360.5" y="394.4" width="2.4" height="1.8" fill="#787878"/><rect x="360.5" y="406.4" width="2.4" height="1.8" fill="#787878"/><rect x="360.5" y="418.4" width="2.4" height="1.8" fill="#787878"/><rect x="360.5" y="430.4" width="2.4" height="1.8" fill="#787878"/><rect x="360.5" y="454.4" width="2.4" height="1.8" fill="#787878"/><rect x="360.5" y="466.4" width="2.4" height="1.8" fill="#787878"/><rect x="360.5" y="478.4" width="2.4" height="1.8" fill="#787878"/><rect x="360.5" y="490.4" width="2.4" height="1.8" fill="#787878"/><rect x="360.5" y="514.4" width="2.4" height="1.8" fill="#787878"/><rect x="360.5" y="526.4" width="2.4" height="1.8" fill="#787878"/><rect x="360.5" y="538.4" width="2.4" height="1.8" fill="#787878"/><rect x="360.5" y="550.4" width="2.4" height="1.8" fill="#787878"/><rect x="360.5" y="574.4" width="2.4" height="1.8" fill="#787878"/><rect x="360.5" y="586.4" width="2.4" height="1.8" fill="#787878"/><rect x="360.5" y="598.4" width="2.4" height="1.8" fill="#787878"/><rect x="360.5" y="610.4" width="2.4" height="1.8" fill="#787878"/><rect x="420.5" y="34.4" width="2.4" height="1.8" fill="#787878"/><rect x="420.5" y="46.4" width="2.4" height="1.8" fill="#787878"/><rect x="420.5" y="58.4" width="2.4" height="1.8" fill="#787878"/><rect x="420.5" y="70.4" width="2.4" height="1.8" fill="#787878"/><rect x="420.5" y="94.4" width="2.4" height="1.8" fill="#787878"/><rect x="420.5" y="106.4" width="2.4" height="1.8" fill="#787878"/><rect x="420.5" y="118.4" width="2.4" height="1.8" fill="#787878"/><rect x="420.5" y="130.4" width="2.4" height="1.8" fill="#787878"/><rect x="420.5" y="154.4" width="2.4" height="1.8" fill="#787878"/><rect x="420.5" y="166.4" width="2.4" height="1.8" fill="#787878"/><rect x="420.5" y="178.4" width="2.4" height="1.8" fill="#787878"/><rect x="420.5" y="190.4" width="2.4" height="1.8" fill="#787878"/><rect x="420.5" y="214.4" width="2.4" height="1.8" fill="#787878"/><rect x="420.5" y="226.4" width="2.4" height="1.8" fill="#787878"/><rect x="420.5" y="238.4" width="2.4" height="1.8" fill="#787878"/><rect x="420.5" y="250.4" width="2.4" height="1.8" fill="#787878"/><rect x="420.5" y="274.4" width="2.4" height="1.8" fill="#787878"/><rect x="420.5" y="286.4" width="2.4" height="1.8" fill="#787878"/><rect x="420.5" y="298.4" width="2.4" height="1.8" fill="#787878"/><rect x="420.5" y="310.4" width="2.4" height="1.8" fill="#787878"/><rect x="420.5" y="334.4" width="2.4" height="1.8" fill="#787878"/><rect x="420.5" y="346.4" width="2.4" height="1.8" fill="#787878"/><rect x="420.5" y="358.4" width="2.4" height="1.8" fill="#787878"/><rect x="420.5" y="370.4" width="2.4" height="1.8" fill="#787878"/><rect x="420.5" y="394.4" width="2.4" height="1.8" fill="#787878"/><rect x="420.5" y="406.4" width="2.4" height="1.8" fill="#787878"/><rect x="420.5" y="418.4" width="2.4" height="1.8" fill="#787878"/><rect x="420.5" y="430.4" width="2.4" height="1.8" fill="#787878"/><rect x="420.5" y="454.4" width="2.4" height="1.8" fill="#787878"/><rect x="420.5" y="466.4" width="2.4" height="1.8" fill="#787878"/><rect x="420.5" y="478.4" width="2.4" height="1.8" fill="#787878"/><rect x="420.5" y="490.4" width="2.4" height="1.8" fill="#787878"/><rect x="420.5" y="514.4" width="2.4" height="1.8" fill="#787878"/><rect x="420.5" y="526.4" width="2.4" height="1.8" fill="#787878"/><rect x="420.5" y="538.4" width="2.4" height="1.8" fill="#787878"/><rect x="420.5" y="550.4" width="2.4" height="1.8" fill="#787878"/><rect x="420.5" y="574.4" width="2.4" height="1.8" fill="#787878"/><rect x="420.5" y="586.4" width="2.4" height="1.8" fill="#787878"/><rect x="420.5" y="598.4" width="2.4" height="1.8" fill="#787878"/><rect x="420.5" y="610.4" width="2.4" height="1.8" fill="#787878"/><rect x="540.5" y="34.4" width="2.4" height="1.8" fill="#787878"/><rect x="540.5" y="46.4" width="2.4" height="1.8" fill="#787878"/><rect x="540.5" y="58.4" width="2.4" height="1.8" fill="#787878"/><rect x="540.5" y="70.4" width="2.4" height="1.8" fill="#787878"/><rect x="540.5" y="94.4" width="2.4" height="1.8" fill="#787878"/><rect x="540.5" y="106.4" width="2.4" height="1.8" fill="#787878"/><rect x="540.5" y="118.4" width="2.4" height="1.8" fill="#787878"/><rect x="540.5" y="130.4" width="2.4" height="1.8" fill="#787878"/><rect x="540.5" y="154.4" width="2.4" height="1.8" fill="#787878"/><rect x="540.5" y="166.4" width="2.4" height="1.8" fill="#787878"/><rect x="540.5" y="178.4" width="2.4" height="1.8" fill="#787878"/><rect x="540.5" y="190.4" width="2.4" height="1.8" fill="#787878"/><rect x="540.5" y="214.4" width="2.4" height="1.8" fill="#787878"/><rect x="540.5" y="226.4" width="2.4" height="1.8" fill="#787878"/><rect x="540.5" y="238.4" width="2.4" height="1.8" fill="#787878"/><rect x="540.5" y="250.4" width="2.4" height="1.8" fill="#787878"/><rect x="540.5" y="274.4" width="2.4" height="1.8" fill="#787878"/><rect x="540.5" y="286.4" width="2.4" height="1.8" fill="#787878"/><rect x="540.5" y="298.4" width="2.4" height="1.8" fill="#787878"/><rect x="540.5" y="310.4" width="2.4" height="1.8" fill="#787878"/><rect x="540.5" y="334.4" width="2.4" height="1.8" fill="#787878"/><rect x="540.5" y="346.4" width="2.4" height="1.8" fill="#787878"/><rect x="540.5" y="358.4" width="2.4" height="1.8" fill="#787878"/><rect x="540.5" y="370.4" width="2.4" height="1.8" fill="#787878"/><rect x="540.5" y="394.4" width="2.4" height="1.8" fill="#787878"/><rect x="540.5" y="406.4" width="2.4" height="1.8" fill="#787878"/><rect x="540.5" y="418.4" width="2.4" height="1.8" fill="#787878"/><rect x="540.5" y="430.4" width="2.4" height="1.8" fill="#787878"/><rect x="540.5" y="454.4" width="2.4" height="1.8" fill="#787878"/><rect x="540.5" y="466.4" width="2.4" height="1.8" fill="#787878"/><rect x="540.5" y="478.4" width="2.4" height="1.8" fill="#787878"/><rect x="540.5" y="490.4" width="2.4" height="1.8" fill="#787878"/><rect x="540.5" y="514.4" width="2.4" height="1.8" fill="#787878"/><rect x="540.5" y="526.4" width="2.4" height="1.8" fill="#787878"/><rect x="540.5" y="538.4" width="2.4" height="1.8" fill="#787878"/><rect x="540.5" y="550.4" width="2.4" height="1.8" fill="#787878"/><rect x="540.5" y="574.4" width="2.4" height="1.8" fill="#787878"/><rect x="540.5" y="586.4" width="2.4" height="1.8" fill="#787878"/><rect x="540.5" y="598.4" width="2.4" height="1.8" fill="#787878"/><rect x="540.5" y="610.4" width="2.4" height="1.8" fill="#787878"/><rect x="600.5" y="34.4" width="2.4" height="1.8" fill="#787878"/><rect x="600.5" y="46.4" width="2.4" height="1.8" fill="#787878"/><rect x="600.5" y="58.4" width="2.4" height="1.8" fill="#787878"/><rect x="600.5" y="70.4" width="2.4" height="1.8" fill="#787878"/><rect x="600.5" y="94.4" width="2.4" height="1.8" fill="#787878"/><rect x="600.5" y="106.4" width="2.4" height="1.8" fill="#787878"/><rect x="600.5" y="118.4" width="2.4" height="1.8" fill="#787878"/><rect x="600.5" y="130.4" width="2.4" height="1.8" fill="#787878"/><rect x="600.5" y="154.4" width="2.4" height="1.8" fill="#787878"/><rect x="600.5" y="166.4" width="2.4" height="1.8" fill="#787878"/><rect x="600.5" y="178.4" width="2.4" height="1.8" fill="#787878"/><rect x="600.5" y="190.4" width="2.4" height="1.8" fill="#787878"/><rect x="600.5" y="214.4" width="2.4" height="1.8" fill="#787878"/><rect x="600.5" y="226.4" width="2.4" height="1.8" fill="#787878"/><rect x="600.5" y="238.4" width="2.4" height="1.8" fill="#787878"/><rect x="600.5" y="250.4" width="2.4" height="1.8" fill="#787878"/><rect x="600.5" y="274.4" width="2.4" height="1.8" fill="#787878"/><rect x="600.5" y="286.4" width="2.4" height="1.8" fill="#787878"/><rect x="600.5" y="298.4" width="2.4" height="1.8" fill="#787878"/><rect x="600.5" y="310.4" width="2.4" height="1.8" fill="#787878"/><rect x="600.5" y="334.4" width="2.4" height="1.8" fill="#787878"/><rect x="600.5" y="346.4" width="2.4" height="1.8" fill="#787878"/><rect x="600.5" y="358.4" width="2.4" height="1.8" fill="#787878"/><rect x="600.5" y="370.4" width="2.4" height="1.8" fill="#787878"/><rect x="600.5" y="394.4" width="2.4" height="1.8" fill="#787878"/><rect x="600.5" y="406.4" width="2.4" height="1.8" fill="#787878"/><rect x="600.5" y="418.4" width="2.4" height="1.8" fill="#787878"/><rect x="600.5" y="430.4" width="2.4" height="1.8" fill="#787878"/><rect x="600.5" y="454.4" width="2.4" height="1.8" fill="#787878"/><rect x="600.5" y="466.4" width="2.4" height="1.8" fill="#787878"/><rect x="600.5" y="478.4" width="2.4" height="1.8" fill="#787878"/><rect x="600.5" y="490.4" width="2.4" height="1.8" fill="#787878"/><rect x="600.5" y="514.4" width="2.4" height="1.8" fill="#787878"/><rect x="600.5" y="526.4" width="2.4" height="1.8" fill="#787878"/><rect x="600.5" y="538.4" width="2.4" height="1.8" fill="#787878"/><rect x="600.5" y="550.4" width="2.4" height="1.8" fill="#787878"/><rect x="600.5" y="574.4" width="2.4" height="1.8" fill="#787878"/><rect x="600.5" y="586.4" width="2.4" height="1.8" fill="#787878"/><rect x="600.5" y="598.4" width="2.4" height="1.8" fill="#787878"/><rect x="600.5" y="610.4" width="2.4" height="1.8" fill="#787878"/><rect x="660.5" y="34.4" width="2.4" height="1.8" fill="#787878"/><rect x="660.5" y="46.4" width="2.4" height="1.8" fill="#787878"/><rect x="660.5" y="58.4" width="2.4" height="1.8" fill="#787878"/><rect x="660.5" y="70.4" width="2.4" height="1.8" fill="#787878"/><rect x="660.5" y="94.4" width="2.4" height="1.8" fill="#787878"/><rect x="660.5" y="106.4" width="2.4" height="1.8" fill="#787878"/><rect x="660.5" y="118.4" width="2.4" height="1.8" fill="#787878"/><rect x="660.5" y="130.4" width="2.4" height="1.8" fill="#787878"/><rect x="660.5" y="154.4" width="2.4" height="1.8" fill="#787878"/><rect x="660.5" y="166.4" width="2.4" height="1.8" fill="#787878"/><rect x="660.5" y="178.4" width="2.4" height="1.8" fill="#787878"/><rect x="660.5" y="190.4" width="2.4" height="1.8" fill="#787878"/><rect x="660.5" y="214.4" width="2.4" height="1.8" fill="#787878"/><rect x="660.5" y="226.4" width="2.4" height="1.8" fill="#787878"/><rect x="660.5" y="238.4" width="2.4" height="1.8" fill="#787878"/><rect x="660.5" y="250.4" width="2.4" height="1.8" fill="#787878"/><rect x="660.5" y="274.4" width="2.4" height="1.8" fill="#787878"/><rect x="660.5" y="286.4" width="2.4" height="1.8" fill="#787878"/><rect x="660.5" y="298.4" width="2.4" height="1.8" fill="#787878"/><rect x="660.5" y="310.4" width="2.4" height="1.8" fill="#787878"/><rect x="660.5" y="334.4" width="2.4" height="1.8" fill="#787878"/><rect x="660.5" y="346.4" width="2.4" height="1.8" fill="#787878"/><rect x="660.5" y="358.4" width="2.4" height="1.8" fill="#787878"/><rect x="660.5" y="370.4" width="2.4" height="1.8" fill="#787878"/><rect x="660.5" y="394.4" width="2.4" height="1.8" fill="#787878"/><rect x="660.5" y="406.4" width="2.4" height="1.8" fill="#787878"/><rect x="660.5" y="418.4" width="2.4" height="1.8" fill="#787878"/><rect x="660.5" y="430.4" width="2.4" height="1.8" fill="#787878"/><rect x="660.5" y="454.4" width="2.4" height="1.8" fill="#787878"/><rect x="660.5" y="466.4" width="2.4" height="1.8" fill="#787878"/><rect x="660.5" y="478.4" width="2.4" height="1.8" fill="#787878"/><rect x="660.5" y="490.4" width="2.4" height="1.8" fill="#787878"/><rect x="660.5" y="514.4" width="2.4" height="1.8" fill="#787878"/><rect x="660.5" y="526.4" width="2.4" height="1.8" fill="#787878"/><rect x="660.5" y="538.4" width="2.4" height="1.8" fill="#787878"/><rect x="660.5" y="550.4" width="2.4" height="1.8" fill="#787878"/><rect x="660.5" y="574.4" width="2.4" height="1.8" fill="#787878"/><rect x="660.5" y="586.4" width="2.4" height="1.8" fill="#787878"/><rect x="660.5" y="598.4" width="2.4" height="1.8" fill="#787878"/><rect x="660.5" y="610.4" width="2.4" height="1.8" fill="#787878"/><rect x="720.5" y="34.4" width="2.4" height="1.8" fill="#787878"/><rect x="720.5" y="46.4" width="2.4" height="1.8" fill="#787878"/><rect x="720.5" y="58.4" width="2.4" height="1.8" fill="#787878"/><rect x="720.5" y="70.4" width="2.4" height="1.8" fill="#787878"/><rect x="720.5" y="94.4" width="2.4" height="1.8" fill="#787878"/><rect x="720.5" y="106.4" width="2.4" height="1.8" fill="#787878"/><rect x="720.5" y="118.4" width="2.4" height="1.8" fill="#787878"/><rect x="720.5" y="130.4" width="2.4" height="1.8" fill="#787878"/><rect x="720.5" y="154.4" width="2.4" height="1.8" fill="#787878"/><rect x="720.5" y="166.4" width="2.4" height="1.8" fill="#787878"/><rect x="720.5" y="178.4" width="2.4" height="1.8" fill="#787878"/><rect x="720.5" y="190.4" width="2.4" height="1.8" fill="#787878"/><rect x="720.5" y="214.4" width="2.4" height="1.8" fill="#787878"/><rect x="720.5" y="226.4" width="2.4" height="1.8" fill="#787878"/><rect x="720.5" y="238.4" width="2.4" height="1.8" fill="#787878"/><rect x="720.5" y="250.4" width="2.4" height="1.8" fill="#787878"/><rect x="720.5" y="274.4" width="2.4" height="1.8" fill="#787878"/><rect x="720.5" y="286.4" width="2.4" height="1.8" fill="#787878"/><rect x="720.5" y="298.4" width="2.4" height="1.8" fill="#787878"/><rect x="720.5" y="310.4" width="2.4" height="1.8" fill="#787878"/><rect x="720.5" y="334.4" width="2.4" height="1.8" fill="#787878"/><rect x="720.5" y="346.4" width="2.4" height="1.8" fill="#787878"/><rect x="720.5" y="358.4" width="2.4" height="1.8" fill="#787878"/><rect x="720.5" y="370.4" width="2.4" height="1.8" fill="#787878"/><rect x="720.5" y="394.4" width="2.4" height="1.8" fill="#787878"/><rect x="720.5" y="406.4" width="2.4" height="1.8" fill="#787878"/><rect x="720.5" y="418.4" width="2.4" height="1.8" fill="#787878"/><rect x="720.5" y="430.4" width="2.4" height="1.8" fill="#787878"/><rect x="720.5" y="454.4" width="2.4" height="1.8" fill="#787878"/><rect x="720.5" y="466.4" width="2.4" height="1.8" fill="#787878"/><rect x="720.5" y="478.4" width="2.4" height="1.8" fill="#787878"/><rect x="720.5" y="490.4" width="2.4" height="1.8" fill="#787878"/><rect x="720.5" y="514.4" width="2.4" height="1.8" fill="#787878"/><rect x="720.5" y="526.4" width="2.4" height="1.8" fill="#787878"/><rect x="720.5" y="538.4" width="2.4" height="1.8" fill="#787878"/><rect x="720.5" y="550.4" width="2.4" height="1.8" fill="#787878"/><rect x="720.5" y="574.4" width="2.4" height="1.8" fill="#787878"/><rect x="720.5" y="586.4" width="2.4" height="1.8" fill="#787878"/><rect x="720.5" y="598.4" width="2.4" height="1.8" fill="#787878"/><rect x="720.5" y="610.4" width="2.4" height="1.8" fill="#787878"/><rect x="780.5" y="34.4" width="2.4" height="1.8" fill="#787878"/><rect x="780.5" y="46.4" width="2.4" height="1.8" fill="#787878"/><rect x="780.5" y="58.4" width="2.4" height="1.8" fill="#787878"/><rect x="780.5" y="70.4" width="2.4" height="1.8" fill="#787878"/><rect x="780.5" y="94.4" width="2.4" height="1.8" fill="#787878"/><rect x="780.5" y="106.4" width="2.4" height="1.8" fill="#787878"/><rect x="780.5" y="118.4" width="2.4" height="1.8" fill="#787878"/><rect x="780.5" y="130.4" width="2.4" height="1.8" fill="#787878"/><rect x="780.5" y="154.4" width="2.4" height="1.8" fill="#787878"/><rect x="780.5" y="166.4" width="2.4" height="1.8" fill="#787878"/><rect x="780.5" y="178.4" width="2.4" height="1.8" fill="#787878"/><rect x="780.5" y="190.4" width="2.4" height="1.8" fill="#787878"/><rect x="780.5" y="214.4" width="2.4" height="1.8" fill="#787878"/><rect x="780.5" y="226.4" width="2.4" height="1.8" fill="#787878"/><rect x="780.5" y="238.4" width="2.4" height="1.8" fill="#787878"/><rect x="780.5" y="250.4" width="2.4" height="1.8" fill="#787878"/><rect x="780.5" y="274.4" width="2.4" height="1.8" fill="#787878"/><rect x="780.5" y="286.4" width="2.4" height="1.8" fill="#787878"/><rect x="780.5" y="298.4" width="2.4" height="1.8" fill="#787878"/><rect x="780.5" y="310.4" width="2.4" height="1.8" fill="#787878"/><rect x="780.5" y="334.4" width="2.4" height="1.8" fill="#787878"/><rect x="780.5" y="346.4" width="2.4" height="1.8" fill="#787878"/><rect x="780.5" y="358.4" width="2.4" height="1.8" fill="#787878"/><rect x="780.5" y="370.4" width="2.4" height="1.8" fill="#787878"/><rect x="780.5" y="394.4" width="2.4" height="1.8" fill="#787878"/><rect x="780.5" y="406.4" width="2.4" height="1.8" fill="#787878"/><rect x="780.5" y="418.4" width="2.4" height="1.8" fill="#787878"/><rect x="780.5" y="430.4" width="2.4" height="1.8" fill="#787878"/><rect x="780.5" y="454.4" width="2.4" height="1.8" fill="#787878"/><rect x="780.5" y="466.4" width="2.4" height="1.8" fill="#787878"/><rect x="780.5" y="478.4" width="2.4" height="1.8" fill="#787878"/><rect x="780.5" y="490.4" width="2.4" height="1.8" fill="#787878"/><rect x="780.5" y="514.4" width="2.4" height="1.8" fill="#787878"/><rect x="780.5" y="526.4" width="2.4" height="1.8" fill="#787878"/><rect x="780.5" y="538.4" width="2.4" height="1.8" fill="#787878"/><rect x="780.5" y="550.4" width="2.4" height="1.8" fill="#787878"/><rect x="780.5" y="574.4" width="2.4" height="1.8" fill="#787878"/><rect x="780.5" y="586.4" width="2.4" height="1.8" fill="#787878"/><rect x="780.5" y="598.4" width="2.4" height="1.8" fill="#787878"/><rect x="780.5" y="610.4" width="2.4" height="1.8" fill="#787878"/><rect x="840.5" y="34.4" width="2.4" height="1.8" fill="#787878"/><rect x="840.5" y="46.4" width="2.4" height="1.8" fill="#787878"/><rect x="840.5" y="58.4" width="2.4" height="1.8" fill="#787878"/><rect x="840.5" y="70.4" width="2.4" height="1.8" fill="#787878"/><rect x="840.5" y="94.4" width="2.4" height="1.8" fill="#787878"/><rect x="840.5" y="106.4" width="2.4" height="1.8" fill="#787878"/><rect x="840.5" y="118.4" width="2.4" height="1.8" fill="#787878"/><rect x="840.5" y="130.4" width="2.4" height="1.8" fill="#787878"/><rect x="840.5" y="154.4" width="2.4" height="1.8" fill="#787878"/><rect x="840.5" y="166.4" width="2.4" height="1.8" fill="#787878"/><rect x="840.5" y="178.4" width="2.4" height="1.8" fill="#787878"/><rect x="840.5" y="190.4" width="2.4" height="1.8" fill="#787878"/><rect x="840.5" y="214.4" width="2.4" height="1.8" fill="#787878"/><rect x="840.5" y="226.4" width="2.4" height="1.8" fill="#787878"/><rect x="840.5" y="238.4" width="2.4" height="1.8" fill="#787878"/><rect x="840.5" y="250.4" width="2.4" height="1.8" fill="#787878"/><rect x="840.5" y="274.4" width="2.4" height="1.8" fill="#787878"/><rect x="840.5" y="286.4" width="2.4" height="1.8" fill="#787878"/><rect x="840.5" y="298.4" width="2.4" height="1.8" fill="#787878"/><rect x="840.5" y="310.4" width="2.4" height="1.8" fill="#787878"/><rect x="840.5" y="334.4" width="2.4" height="1.8" fill="#787878"/><rect x="840.5" y="346.4" width="2.4" height="1.8" fill="#787878"/><rect x="840.5" y="358.4" width="2.4" height="1.8" fill="#787878"/><rect x="840.5" y="370.4" width="2.4" height="1.8" fill="#787878"/><rect x="840.5" y="394.4" width="2.4" height="1.8" fill="#787878"/><rect x="840.5" y="406.4" width="2.4" height="1.8" fill="#787878"/><rect x="840.5" y="418.4" width="2.4" height="1.8" fill="#787878"/><rect x="840.5" y="430.4" width="2.4" height="1.8" fill="#787878"/><rect x="840.5" y="454.4" width="2.4" height="1.8" fill="#787878"/><rect x="840.5" y="466.4" width="2.4" height="1.8" fill="#787878"/><rect x="840.5" y="478.4" width="2.4" height="1.8" fill="#787878"/><rect x="840.5" y="490.4" width="2.4" height="1.8" fill="#787878"/><rect x="840.5" y="514.4" width="2.4" height="1.8" fill="#787878"/><rect x="840.5" y="526.4" width="2.4" height="1.8" fill="#787878"/><rect x="840.5" y="538.4" width="2.4" height="1.8" fill="#787878"/><rect x="840.5" y="550.4" width="2.4" height="1.8" fill="#787878"/><rect x="840.5" y="574.4" width="2.4" height="1.8" fill="#787878"/><rect x="840.5" y="586.4" width="2.4" height="1.8" fill="#787878"/><rect x="840.5" y="598.4" width="2.4" height="1.8" fill="#787878"/><rect x="840.5" y="610.4" width="2.4" height="1.8" fill="#787878"/><rect x="900.5" y="34.4" width="2.4" height="1.8" fill="#787878"/><rect x="900.5" y="46.4" width="2.4" height="1.8" fill="#787878"/><rect x="900.5" y="58.4" width="2.4" height="1.8" fill="#787878"/><rect x="900.5" y="70.4" width="2.4" height="1.8" fill="#787878"/><rect x="900.5" y="94.4" width="2.4" height="1.8" fill="#787878"/><rect x="900.5" y="106.4" width="2.4" height="1.8" fill="#787878"/><rect x="900.5" y="118.4" width="2.4" height="1.8" fill="#787878"/><rect x="900.5" y="130.4" width="2.4" height="1.8" fill="#787878"/><rect x="900.5" y="154.4" width="2.4" height="1.8" fill="#787878"/><rect x="900.5" y="166.4" width="2.4" height="1.8" fill="#787878"/><rect x="900.5" y="178.4" width="2.4" height="1.8" fill="#787878"/><rect x="900.5" y="190.4" width="2.4" height="1.8" fill="#787878"/><rect x="900.5" y="214.4" width="2.4" height="1.8" fill="#787878"/><rect x="900.5" y="226.4" width="2.4" height="1.8" fill="#787878"/><rect x="900.5" y="238.4" width="2.4" height="1.8" fill="#787878"/><rect x="900.5" y="250.4" width="2.4" height="1.8" fill="#787878"/><rect x="900.5" y="274.4" width="2.4" height="1.8" fill="#787878"/><rect x="900.5" y="286.4" width="2.4" height="1.8" fill="#787878"/><rect x="900.5" y="298.4" width="2.4" height="1.8" fill="#787878"/><rect x="900.5" y="310.4" width="2.4" height="1.8" fill="#787878"/><rect x="900.5" y="334.4" width="2.4" height="1.8" fill="#787878"/><rect x="900.5" y="346.4" width="2.4" height="1.8" fill="#787878"/><rect x="900.5" y="358.4" width="2.4" height="1.8" fill="#787878"/><rect x="900.5" y="370.4" width="2.4" height="1.8" fill="#787878"/><rect x="900.5" y="394.4" width="2.4" height="1.8" fill="#787878"/><rect x="900.5" y="406.4" width="2.4" height="1.8" fill="#787878"/><rect x="900.5" y="418.4" width="2.4" height="1.8" fill="#787878"/><rect x="900.5" y="430.4" width="2.4" height="1.8" fill="#787878"/><rect x="900.5" y="454.4" width="2.4" height="1.8" fill="#787878"/><rect x="900.5" y="466.4" width="2.4" height="1.8" fill="#787878"/><rect x="900.5" y="478.4" width="2.4" height="1.8" fill="#787878"/><rect x="900.5" y="490.4" width="2.4" height="1.8" fill="#787878"/><rect x="900.5" y="514.4" width="2.4" height="1.8" fill="#787878"/><rect x="900.5" y="526.4" width="2.4" height="1.8" fill="#787878"/><rect x="900.5" y="538.4" width="2.4" height="1.8" fill="#787878"/><rect x="900.5" y="550.4" width="2.4" height="1.8" fill="#787878"/><rect x="900.5" y="574.4" width="2.4" height="1.8" fill="#787878"/><rect x="900.5" y="586.4" width="2.4" height="1.8" fill="#787878"/><rect x="900.5" y="598.4" width="2.4" height="1.8" fill="#787878"/><rect x="900.5" y="610.4" width="2.4" height="1.8" fill="#787878"/><rect x="479.7" y="34.5" width="4" height="1.6" fill="#e8e8e8"/><rect x="479.7" y="46.5" width="4" height="1.6" fill="#e8e8e8"/><rect x="479.7" y="58.5" width="4" height="1.6" fill="#e8e8e8"/><rect x="479.7" y="70.5" width="4" height="1.6" fill="#e8e8e8"/><rect x="479.7" y="82.5" width="4" height="1.6" fill="#e8e8e8"/><rect x="479.7" y="94.5" width="4" height="1.6" fill="#e8e8e8"/><rect x="479.7" y="106.5" width="4" height="1.6" fill="#e8e8e8"/><rect x="479.7" y="118.5" width="4" height="1.6" fill="#e8e8e8"/><rect x="479.7" y="130.5" width="4" height="1.6" fill="#e8e8e8"/><rect x="479.7" y="142.5" width="4" height="1.6" fill="#e8e8e8"/><rect x="479.7" y="154.5" width="4" height="1.6" fill="#e8e8e8"/><rect x="479.7" y="166.5" width="4" height="1.6" fill="#e8e8e8"/><rect x="479.7" y="178.5" width="4" height="1.6" fill="#e8e8e8"/><rect x="479.7" y="190.5" width="4" height="1.6" fill="#e8e8e8"/><rect x="479.7" y="202.5" width="4" height="1.6" fill="#e8e8e8"/><rect x="479.7" y="214.5" width="4" height="1.6" fill="#e8e8e8"/><rect x="479.7" y="226.5" width="4" height="1.6" fill="#e8e8e8"/><rect x="479.7" y="238.5" width="4" height="1.6" fill="#e8e8e8"/><rect x="479.7" y="250.5" width="4" height="1.6" fill="#e8e8e8"/><rect x="479.7" y="262.5" width="4" height="1.6" fill="#e8e8e8"/><rect x="479.7" y="274.5" width="4" height="1.6" fill="#e8e8e8"/><rect x="479.7" y="286.5" width="4" height="1.6" fill="#e8e8e8"/><rect x="479.7" y="298.5" width="4" height="1.6" fill="#e8e8e8"/><rect x="479.7" y="310.5" width="4" height="1.6" fill="#e8e8e8"/><rect x="479.7" y="322.5" width="4" height="1.6" fill="#e8e8e8"/><rect x="479.7" y="334.5" width="4" height="1.6" fill="#e8e8e8"/><rect x="479.7" y="346.5" width="4" height="1.6" fill="#e8e8e8"/><rect x="479.7" y="358.5" width="4" height="1.6" fill="#e8e8e8"/><rect x="479.7" y="370.5" width="4" height="1.6" fill="#e8e8e8"/><rect x="479.7" y="382.5" width="4" height="1.6" fill="#e8e8e8"/><rect x="479.7" y="394.5" width="4" height="1.6" fill="#e8e8e8"/><rect x="479.7" y="406.5" width="4" height="1.6" fill="#e8e8e8"/><rect x="479.7" y="418.5" width="4" height="1.6" fill="#e8e8e8"/><rect x="479.7" y="430.5" width="4" height="1.6" fill="#e8e8e8"/><rect x="479.7" y="442.5" width="4" height="1.6" fill="#e8e8e8"/><rect x="479.7" y="454.5" width="4" height="1.6" fill="#e8e8e8"/><rect x="479.7" y="466.5" width="4" height="1.6" fill="#e8e8e8"/><rect x="479.7" y="478.5" width="4" height="1.6" fill="#e8e8e8"/><rect x="479.7" y="490.5" width="4" height="1.6" fill="#e8e8e8"/><rect x="479.7" y="502.5" width="4" height="1.6" fill="#e8e8e8"/><rect x="479.7" y="514.5" width="4" height="1.6" fill="#e8e8e8"/><rect x="479.7" y="526.5" width="4" height="1.6" fill="#e8e8e8"/><rect x="479.7" y="538.5" width="4" height="1.6" fill="#e8e8e8"/><rect x="479.7" y="550.5" width="4" height="1.6" fill="#e8e8e8"/><rect x="479.7" y="562.5" width="4" height="1.6" fill="#e8e8e8"/><rect x="479.7" y="574.5" width="4" height="1.6" fill="#e8e8e8"/><rect x="479.7" y="586.5" width="4" height="1.6" fill="#e8e8e8"/><rect x="479.7" y="598.5" width="4" height="1.6" fill="#e8e8e8"/><rect x="479.7" y="610.5" width="4" height="1.6" fill="#e8e8e8"/><rect x="36.9" y="25" width="1.6" height="3.5" fill="#e8e8e8"/><rect x="36.9" y="617.5" width="1.6" height="3.5" fill="#e8e8e8"/><rect x="48.9" y="25" width="1.6" height="3.5" fill="#e8e8e8"/><rect x="48.9" y="617.5" width="1.6" height="3.5" fill="#e8e8e8"/><rect x="60.9" y="25" width="1.6" height="8" fill="#e8e8e8"/><rect x="60.9" y="613" width="1.6" height="8" fill="#e8e8e8"/><rect x="72.9" y="25" width="1.6" height="3.5" fill="#e8e8e8"/><rect x="72.9" y="617.5" width="1.6" height="3.5" fill="#e8e8e8"/><rect x="84.9" y="25" width="1.6" height="3.5" fill="#e8e8e8"/><rect x="84.9" y="617.5" width="1.6" height="3.5" fill="#e8e8e8"/><rect x="96.9" y="25" width="1.6" height="3.5" fill="#e8e8e8"/><rect x="96.9" y="617.5" width="1.6" height="3.5" fill="#e8e8e8"/><rect x="108.9" y="25" width="1.6" height="3.5" fill="#e8e8e8"/><rect x="108.9" y="617.5" width="1.6" height="3.5" fill="#e8e8e8"/><rect x="120.9" y="25" width="1.6" height="8" fill="#e8e8e8"/><rect x="120.9" y="613" width="1.6" height="8" fill="#e8e8e8"/><rect x="132.9" y="25" width="1.6" height="3.5" fill="#e8e8e8"/><rect x="132.9" y="617.5" width="1.6" height="3.5" fill="#e8e8e8"/><rect x="144.9" y="25" width="1.6" height="3.5" fill="#e8e8e8"/><rect x="144.9" y="617.5" width="1.6" height="3.5" fill="#e8e8e8"/><rect x="156.9" y="25" width="1.6" height="3.5" fill="#e8e8e8"/><rect x="156.9" y="617.5" width="1.6" height="3.5" fill="#e8e8e8"/><rect x="168.9" y="25" width="1.6" height="3.5" fill="#e8e8e8"/><rect x="168.9" y="617.5" width="1.6" height="3.5" fill="#e8e8e8"/><rect x="180.9" y="25" width="1.6" height="8" fill="#e8e8e8"/><rect x="180.9" y="613" width="1.6" height="8" fill="#e8e8e8"/><rect x="192.9" y="25" width="1.6" height="3.5" fill="#e8e8e8"/><rect x="192.9" y="617.5" width="1.6" height="3.5" fill="#e8e8e8"/><rect x="204.9" y="25" width="1.6" height="3.5" fill="#e8e8e8"/><rect x="204.9" y="617.5" width="1.6" height="3.5" fill="#e8e8e8"/><rect x="216.9" y="25" width="1.6" height="3.5" fill="#e8e8e8"/><rect x="216.9" y="617.5" width="1.6" height="3.5" fill="#e8e8e8"/><rect x="228.9" y="25" width="1.6" height="3.5" fill="#e8e8e8"/><rect x="228.9" y="617.5" width="1.6" height="3.5" fill="#e8e8e8"/><rect x="240.9" y="25" width="1.6" height="8" fill="#e8e8e8"/><rect x="240.9" y="613" width="1.6" height="8" fill="#e8e8e8"/><rect x="252.9" y="25" width="1.6" height="3.5" fill="#e8e8e8"/><rect x="252.9" y="617.5" width="1.6" height="3.5" fill="#e8e8e8"/><rect x="264.9" y="25" width="1.6" height="3.5" fill="#e8e8e8"/><rect x="264.9" y="617.5" width="1.6" height="3.5" fill="#e8e8e8"/><rect x="276.9" y="25" width="1.6" height="3.5" fill="#e8e8e8"/><rect x="276.9" y="617.5" width="1.6" height="3.5" fill="#e8e8e8"/><rect x="288.9" y="25" width="1.6" height="3.5" fill="#e8e8e8"/><rect x="288.9" y="617.5" width="1.6" height="3.5" fill="#e8e8e8"/><rect x="300.9" y="25" width="1.6" height="8" fill="#e8e8e8"/><rect x="300.9" y="613" width="1.6" height="8" fill="#e8e8e8"/><rect x="312.9" y="25" width="1.6" height="3.5" fill="#e8e8e8"/><rect x="312.9" y="617.5" width="1.6" height="3.5" fill="#e8e8e8"/><rect x="324.9" y="25" width="1.6" height="3.5" fill="#e8e8e8"/><rect x="324.9" y="617.5" width="1.6" height="3.5" fill="#e8e8e8"/><rect x="336.9" y="25" width="1.6" height="3.5" fill="#e8e8e8"/><rect x="336.9" y="617.5" width="1.6" height="3.5" fill="#e8e8e8"/><rect x="348.9" y="25" width="1.6" height="3.5" fill="#e8e8e8"/><rect x="348.9" y="617.5" width="1.6" height="3.5" fill="#e8e8e8"/><rect x="360.9" y="25" width="1.6" height="8" fill="#e8e8e8"/><rect x="360.9" y="613" width="1.6" height="8" fill="#e8e8e8"/><rect x="372.9" y="25" width="1.6" height="3.5" fill="#e8e8e8"/><rect x="372.9" y="617.5" width="1.6" height="3.5" fill="#e8e8e8"/><rect x="384.9" y="25" width="1.6" height="3.5" fill="#e8e8e8"/><rect x="384.9" y="617.5" width="1.6" height="3.5" fill="#e8e8e8"/><rect x="396.9" y="25" width="1.6" height="3.5" fill="#e8e8e8"/><rect x="396.9" y="617.5" width="1.6" height="3.5" fill="#e8e8e8"/><rect x="408.9" y="25" width="1.6" height="3.5" fill="#e8e8e8"/><rect x="408.9" y="617.5" width="1.6" height="3.5" fill="#e8e8e8"/><rect x="420.9" y="25" width="1.6" height="8" fill="#e8e8e8"/><rect x="420.9" y="613" width="1.6" height="8" fill="#e8e8e8"/><rect x="432.9" y="25" width="1.6" height="3.5" fill="#e8e8e8"/><rect x="432.9" y="617.5" width="1.6" height="3.5" fill="#e8e8e8"/><rect x="444.9" y="25" width="1.6" height="3.5" fill="#e8e8e8"/><rect x="444.9" y="617.5" width="1.6" height="3.5" fill="#e8e8e8"/><rect x="456.9" y="25" width="1.6" height="3.5" fill="#e8e8e8"/><rect x="456.9" y="617.5" width="1.6" height="3.5" fill="#e8e8e8"/><rect x="468.9" y="25" width="1.6" height="3.5" fill="#e8e8e8"/><rect x="468.9" y="617.5" width="1.6" height="3.5" fill="#e8e8e8"/><rect x="480.9" y="25" width="1.6" height="8" fill="#e8e8e8"/><rect x="480.9" y="613" width="1.6" height="8" fill="#e8e8e8"/><rect x="492.9" y="25" width="1.6" height="3.5" fill="#e8e8e8"/><rect x="492.9" y="617.5" width="1.6" height="3.5" fill="#e8e8e8"/><rect x="504.9" y="25" width="1.6" height="3.5" fill="#e8e8e8"/><rect x="504.9" y="617.5" width="1.6" height="3.5" fill="#e8e8e8"/><rect x="516.9" y="25" width="1.6" height="3.5" fill="#e8e8e8"/><rect x="516.9" y="617.5" width="1.6" height="3.5" fill="#e8e8e8"/><rect x="528.9" y="25" width="1.6" height="3.5" fill="#e8e8e8"/><rect x="528.9" y="617.5" width="1.6" height="3.5" fill="#e8e8e8"/><rect x="540.9" y="25" width="1.6" height="8" fill="#e8e8e8"/><rect x="540.9" y="613" width="1.6" height="8" fill="#e8e8e8"/><rect x="552.9" y="25" width="1.6" height="3.5" fill="#e8e8e8"/><rect x="552.9" y="617.5" width="1.6" height="3.5" fill="#e8e8e8"/><rect x="564.9" y="25" width="1.6" height="3.5" fill="#e8e8e8"/><rect x="564.9" y="617.5" width="1.6" height="3.5" fill="#e8e8e8"/><rect x="576.9" y="25" width="1.6" height="3.5" fill="#e8e8e8"/><rect x="576.9" y="617.5" width="1.6" height="3.5" fill="#e8e8e8"/><rect x="588.9" y="25" width="1.6" height="3.5" fill="#e8e8e8"/><rect x="588.9" y="617.5" width="1.6" height="3.5" fill="#e8e8e8"/><rect x="600.9" y="25" width="1.6" height="8" fill="#e8e8e8"/><rect x="600.9" y="613" width="1.6" height="8" fill="#e8e8e8"/><rect x="612.9" y="25" width="1.6" height="3.5" fill="#e8e8e8"/><rect x="612.9" y="617.5" width="1.6" height="3.5" fill="#e8e8e8"/><rect x="624.9" y="25" width="1.6" height="3.5" fill="#e8e8e8"/><rect x="624.9" y="617.5" width="1.6" height="3.5" fill="#e8e8e8"/><rect x="636.9" y="25" width="1.6" height="3.5" fill="#e8e8e8"/><rect x="636.9" y="617.5" width="1.6" height="3.5" fill="#e8e8e8"/><rect x="648.9" y="25" width="1.6" height="3.5" fill="#e8e8e8"/><rect x="648.9" y="617.5" width="1.6" height="3.5" fill="#e8e8e8"/><rect x="660.9" y="25" width="1.6" height="8" fill="#e8e8e8"/><rect x="660.9" y="613" width="1.6" height="8" fill="#e8e8e8"/><rect x="672.9" y="25" width="1.6" height="3.5" fill="#e8e8e8"/><rect x="672.9" y="617.5" width="1.6" height="3.5" fill="#e8e8e8"/><rect x="684.9" y="25" width="1.6" height="3.5" fill="#e8e8e8"/><rect x="684.9" y="617.5" width="1.6" height="3.5" fill="#e8e8e8"/><rect x="696.9" y="25" width="1.6" height="3.5" fill="#e8e8e8"/><rect x="696.9" y="617.5" width="1.6" height="3.5" fill="#e8e8e8"/><rect x="708.9" y="25" width="1.6" height="3.5" fill="#e8e8e8"/><rect x="708.9" y="617.5" width="1.6" height="3.5" fill="#e8e8e8"/><rect x="720.9" y="25" width="1.6" height="8" fill="#e8e8e8"/><rect x="720.9" y="613" width="1.6" height="8" fill="#e8e8e8"/><rect x="732.9" y="25" width="1.6" height="3.5" fill="#e8e8e8"/><rect x="732.9" y="617.5" width="1.6" height="3.5" fill="#e8e8e8"/><rect x="744.9" y="25" width="1.6" height="3.5" fill="#e8e8e8"/><rect x="744.9" y="617.5" width="1.6" height="3.5" fill="#e8e8e8"/><rect x="756.9" y="25" width="1.6" height="3.5" fill="#e8e8e8"/><rect x="756.9" y="617.5" width="1.6" height="3.5" fill="#e8e8e8"/><rect x="768.9" y="25" width="1.6" height="3.5" fill="#e8e8e8"/><rect x="768.9" y="617.5" width="1.6" height="3.5" fill="#e8e8e8"/><rect x="780.9" y="25" width="1.6" height="8" fill="#e8e8e8"/><rect x="780.9" y="613" width="1.6" height="8" fill="#e8e8e8"/><rect x="792.9" y="25" width="1.6" height="3.5" fill="#e8e8e8"/><rect x="792.9" y="617.5" width="1.6" height="3.5" fill="#e8e8e8"/><rect x="804.9" y="25" width="1.6" height="3.5" fill="#e8e8e8"/><rect x="804.9" y="617.5" width="1.6" height="3.5" fill="#e8e8e8"/><rect x="816.9" y="25" width="1.6" height="3.5" fill="#e8e8e8"/><rect x="816.9" y="617.5" width="1.6" height="3.5" fill="#e8e8e8"/><rect x="828.9" y="25" width="1.6" height="3.5" fill="#e8e8e8"/><rect x="828.9" y="617.5" width="1.6" height="3.5" fill="#e8e8e8"/><rect x="840.9" y="25" width="1.6" height="8" fill="#e8e8e8"/><rect x="840.9" y="613" width="1.6" height="8" fill="#e8e8e8"/><rect x="852.9" y="25" width="1.6" height="3.5" fill="#e8e8e8"/><rect x="852.9" y="617.5" width="1.6" height="3.5" fill="#e8e8e8"/><rect x="864.9" y="25" width="1.6" height="3.5" fill="#e8e8e8"/><rect x="864.9" y="617.5" width="1.6" height="3.5" fill="#e8e8e8"/><rect x="876.9" y="25" width="1.6" height="3.5" fill="#e8e8e8"/><rect x="876.9" y="617.5" width="1.6" height="3.5" fill="#e8e8e8"/><rect x="888.9" y="25" width="1.6" height="3.5" fill="#e8e8e8"/><rect x="888.9" y="617.5" width="1.6" height="3.5" fill="#e8e8e8"/><rect x="900.9" y="25" width="1.6" height="8" fill="#e8e8e8"/><rect x="900.9" y="613" width="1.6" height="8" fill="#e8e8e8"/><rect x="912.9" y="25" width="1.6" height="3.5" fill="#e8e8e8"/><rect x="912.9" y="617.5" width="1.6" height="3.5" fill="#e8e8e8"/><rect x="924.9" y="25" width="1.6" height="3.5" fill="#e8e8e8"/><rect x="924.9" y="617.5" width="1.6" height="3.5" fill="#e8e8e8"/><rect x="26" y="34.5" width="4" height="1.6" fill="#e8e8e8"/><rect x="930" y="34.5" width="4" height="1.6" fill="#e8e8e8"/><rect x="26" y="46.5" width="4" height="1.6" fill="#e8e8e8"/><rect x="930" y="46.5" width="4" height="1.6" fill="#e8e8e8"/><rect x="26" y="58.5" width="4" height="1.6" fill="#e8e8e8"/><rect x="930" y="58.5" width="4" height="1.6" fill="#e8e8e8"/><rect x="26" y="70.5" width="4" height="1.6" fill="#e8e8e8"/><rect x="930" y="70.5" width="4" height="1.6" fill="#e8e8e8"/><rect x="26" y="82.5" width="8" height="1.6" fill="#e8e8e8"/><rect x="926" y="82.5" width="8" height="1.6" fill="#e8e8e8"/><rect x="26" y="94.5" width="4" height="1.6" fill="#e8e8e8"/><rect x="930" y="94.5" width="4" height="1.6" fill="#e8e8e8"/><rect x="26" y="106.5" width="4" height="1.6" fill="#e8e8e8"/><rect x="930" y="106.5" width="4" height="1.6" fill="#e8e8e8"/><rect x="26" y="118.5" width="4" height="1.6" fill="#e8e8e8"/><rect x="930" y="118.5" width="4" height="1.6" fill="#e8e8e8"/><rect x="26" y="130.5" width="4" height="1.6" fill="#e8e8e8"/><rect x="930" y="130.5" width="4" height="1.6" fill="#e8e8e8"/><rect x="26" y="142.5" width="8" height="1.6" fill="#e8e8e8"/><rect x="926" y="142.5" width="8" height="1.6" fill="#e8e8e8"/><rect x="26" y="154.5" width="4" height="1.6" fill="#e8e8e8"/><rect x="930" y="154.5" width="4" height="1.6" fill="#e8e8e8"/><rect x="26" y="166.5" width="4" height="1.6" fill="#e8e8e8"/><rect x="930" y="166.5" width="4" height="1.6" fill="#e8e8e8"/><rect x="26" y="178.5" width="4" height="1.6" fill="#e8e8e8"/><rect x="930" y="178.5" width="4" height="1.6" fill="#e8e8e8"/><rect x="26" y="190.5" width="4" height="1.6" fill="#e8e8e8"/><rect x="930" y="190.5" width="4" height="1.6" fill="#e8e8e8"/><rect x="26" y="202.5" width="8" height="1.6" fill="#e8e8e8"/><rect x="926" y="202.5" width="8" height="1.6" fill="#e8e8e8"/><rect x="26" y="214.5" width="4" height="1.6" fill="#e8e8e8"/><rect x="930" y="214.5" width="4" height="1.6" fill="#e8e8e8"/><rect x="26" y="226.5" width="4" height="1.6" fill="#e8e8e8"/><rect x="930" y="226.5" width="4" height="1.6" fill="#e8e8e8"/><rect x="26" y="238.5" width="4" height="1.6" fill="#e8e8e8"/><rect x="930" y="238.5" width="4" height="1.6" fill="#e8e8e8"/><rect x="26" y="250.5" width="4" height="1.6" fill="#e8e8e8"/><rect x="930" y="250.5" width="4" height="1.6" fill="#e8e8e8"/><rect x="26" y="262.5" width="8" height="1.6" fill="#e8e8e8"/><rect x="926" y="262.5" width="8" height="1.6" fill="#e8e8e8"/><rect x="26" y="274.5" width="4" height="1.6" fill="#e8e8e8"/><rect x="930" y="274.5" width="4" height="1.6" fill="#e8e8e8"/><rect x="26" y="286.5" width="4" height="1.6" fill="#e8e8e8"/><rect x="930" y="286.5" width="4" height="1.6" fill="#e8e8e8"/><rect x="26" y="298.5" width="4" height="1.6" fill="#e8e8e8"/><rect x="930" y="298.5" width="4" height="1.6" fill="#e8e8e8"/><rect x="26" y="310.5" width="4" height="1.6" fill="#e8e8e8"/><rect x="930" y="310.5" width="4" height="1.6" fill="#e8e8e8"/><rect x="26" y="322.5" width="8" height="1.6" fill="#e8e8e8"/><rect x="926" y="322.5" width="8" height="1.6" fill="#e8e8e8"/><rect x="26" y="334.5" width="4" height="1.6" fill="#e8e8e8"/><rect x="930" y="334.5" width="4" height="1.6" fill="#e8e8e8"/><rect x="26" y="346.5" width="4" height="1.6" fill="#e8e8e8"/><rect x="930" y="346.5" width="4" height="1.6" fill="#e8e8e8"/><rect x="26" y="358.5" width="4" height="1.6" fill="#e8e8e8"/><rect x="930" y="358.5" width="4" height="1.6" fill="#e8e8e8"/><rect x="26" y="370.5" width="4" height="1.6" fill="#e8e8e8"/><rect x="930" y="370.5" width="4" height="1.6" fill="#e8e8e8"/><rect x="26" y="382.5" width="8" height="1.6" fill="#e8e8e8"/><rect x="926" y="382.5" width="8" height="1.6" fill="#e8e8e8"/><rect x="26" y="394.5" width="4" height="1.6" fill="#e8e8e8"/><rect x="930" y="394.5" width="4" height="1.6" fill="#e8e8e8"/><rect x="26" y="406.5" width="4" height="1.6" fill="#e8e8e8"/><rect x="930" y="406.5" width="4" height="1.6" fill="#e8e8e8"/><rect x="26" y="418.5" width="4" height="1.6" fill="#e8e8e8"/><rect x="930" y="418.5" width="4" height="1.6" fill="#e8e8e8"/><rect x="26" y="430.5" width="4" height="1.6" fill="#e8e8e8"/><rect x="930" y="430.5" width="4" height="1.6" fill="#e8e8e8"/><rect x="26" y="442.5" width="8" height="1.6" fill="#e8e8e8"/><rect x="926" y="442.5" width="8" height="1.6" fill="#e8e8e8"/><rect x="26" y="454.5" width="4" height="1.6" fill="#e8e8e8"/><rect x="930" y="454.5" width="4" height="1.6" fill="#e8e8e8"/><rect x="26" y="466.5" width="4" height="1.6" fill="#e8e8e8"/><rect x="930" y="466.5" width="4" height="1.6" fill="#e8e8e8"/><rect x="26" y="478.5" width="4" height="1.6" fill="#e8e8e8"/><rect x="930" y="478.5" width="4" height="1.6" fill="#e8e8e8"/><rect x="26" y="490.5" width="4" height="1.6" fill="#e8e8e8"/><rect x="930" y="490.5" width="4" height="1.6" fill="#e8e8e8"/><rect x="26" y="502.5" width="8" height="1.6" fill="#e8e8e8"/><rect x="926" y="502.5" width="8" height="1.6" fill="#e8e8e8"/><rect x="26" y="514.5" width="4" height="1.6" fill="#e8e8e8"/><rect x="930" y="514.5" width="4" height="1.6" fill="#e8e8e8"/><rect x="26" y="526.5" width="4" height="1.6" fill="#e8e8e8"/><rect x="930" y="526.5" width="4" height="1.6" fill="#e8e8e8"/><rect x="26" y="538.5" width="4" height="1.6" fill="#e8e8e8"/><rect x="930" y="538.5" width="4" height="1.6" fill="#e8e8e8"/><rect x="26" y="550.5" width="4" height="1.6" fill="#e8e8e8"/><rect x="930" y="550.5" width="4" height="1.6" fill="#e8e8e8"/><rect x="26" y="562.5" width="8" height="1.6" fill="#e8e8e8"/><rect x="926" y="562.5" width="8" height="1.6" fill="#e8e8e8"/><rect x="26" y="574.5" width="4" height="1.6" fill="#e8e8e8"/><rect x="930" y="574.5" width="4" height="1.6" fill="#e8e8e8"/><rect x="26" y="586.5" width="4" height="1.6" fill="#e8e8e8"/><rect x="930" y="586.5" width="4" height="1.6" fill="#e8e8e8"/><rect x="26" y="598.5" width="4" height="1.6" fill="#e8e8e8"/><rect x="930" y="598.5" width="4" height="1.6" fill="#e8e8e8"/><rect x="26" y="610.5" width="4" height="1.6" fill="#e8e8e8"/><rect x="930" y="610.5" width="4" height="1.6" fill="#e8e8e8"/><rect x="25" y="24" width="910" height="598" fill="none" stroke="#f4f4f4" stroke-width="2"/><rect x="24" y="620.5" width="912" height="3" fill="#f4f4f4"/><rect x="26" y="218.9" width="908" height="2" fill="#4a0c5c"/><rect x="28.0" y="218.9" width="4" height="2" fill="#8c36a8"/><rect x="36.4" y="218.9" width="4" height="2" fill="#8c36a8"/><rect x="44.8" y="218.9" width="4" height="2" fill="#8c36a8"/><rect x="53.2" y="218.9" width="4" height="2" fill="#8c36a8"/><rect x="61.6" y="218.9" width="4" height="2" fill="#8c36a8"/><rect x="70.0" y="218.9" width="4" height="2" fill="#8c36a8"/><rect x="78.4" y="218.9" width="4" height="2" fill="#8c36a8"/><rect x="86.8" y="218.9" width="4" height="2" fill="#8c36a8"/><rect x="95.2" y="218.9" width="4" height="2" fill="#8c36a8"/><rect x="103.6" y="218.9" width="4" height="2" fill="#8c36a8"/><rect x="112.0" y="218.9" width="4" height="2" fill="#8c36a8"/><rect x="120.4" y="218.9" width="4" height="2" fill="#8c36a8"/><rect x="128.8" y="218.9" width="4" height="2" fill="#8c36a8"/><rect x="137.2" y="218.9" width="4" height="2" fill="#8c36a8"/><rect x="145.6" y="218.9" width="4" height="2" fill="#8c36a8"/><rect x="154.0" y="218.9" width="4" height="2" fill="#8c36a8"/><rect x="162.4" y="218.9" width="4" height="2" fill="#8c36a8"/><rect x="170.8" y="218.9" width="4" height="2" fill="#8c36a8"/><rect x="179.2" y="218.9" width="4" height="2" fill="#8c36a8"/><rect x="187.6" y="218.9" width="4" height="2" fill="#8c36a8"/><rect x="196.0" y="218.9" width="4" height="2" fill="#8c36a8"/><rect x="204.4" y="218.9" width="4" height="2" fill="#8c36a8"/><rect x="212.8" y="218.9" width="4" height="2" fill="#8c36a8"/><rect x="221.2" y="218.9" width="4" height="2" fill="#8c36a8"/><rect x="229.6" y="218.9" width="4" height="2" fill="#8c36a8"/><rect x="238.0" y="218.9" width="4" height="2" fill="#8c36a8"/><rect x="246.4" y="218.9" width="4" height="2" fill="#8c36a8"/><rect x="254.8" y="218.9" width="4" height="2" fill="#8c36a8"/><rect x="263.2" y="218.9" width="4" height="2" fill="#8c36a8"/><rect x="271.6" y="218.9" width="4" height="2" fill="#8c36a8"/><rect x="280.0" y="218.9" width="4" height="2" fill="#8c36a8"/><rect x="288.4" y="218.9" width="4" height="2" fill="#8c36a8"/><rect x="296.8" y="218.9" width="4" height="2" fill="#8c36a8"/><rect x="305.2" y="218.9" width="4" height="2" fill="#8c36a8"/><rect x="313.6" y="218.9" width="4" height="2" fill="#8c36a8"/><rect x="322.0" y="218.9" width="4" height="2" fill="#8c36a8"/><rect x="330.4" y="218.9" width="4" height="2" fill="#8c36a8"/><rect x="338.8" y="218.9" width="4" height="2" fill="#8c36a8"/><rect x="347.2" y="218.9" width="4" height="2" fill="#8c36a8"/><rect x="355.6" y="218.9" width="4" height="2" fill="#8c36a8"/><rect x="364.0" y="218.9" width="4" height="2" fill="#8c36a8"/><rect x="372.4" y="218.9" width="4" height="2" fill="#8c36a8"/><rect x="380.8" y="218.9" width="4" height="2" fill="#8c36a8"/><rect x="389.2" y="218.9" width="4" height="2" fill="#8c36a8"/><rect x="397.6" y="218.9" width="4" height="2" fill="#8c36a8"/><rect x="406.0" y="218.9" width="4" height="2" fill="#8c36a8"/><rect x="414.4" y="218.9" width="4" height="2" fill="#8c36a8"/><rect x="422.8" y="218.9" width="4" height="2" fill="#8c36a8"/><rect x="431.2" y="218.9" width="4" height="2" fill="#8c36a8"/><rect x="439.6" y="218.9" width="4" height="2" fill="#8c36a8"/><rect x="448.0" y="218.9" width="4" height="2" fill="#8c36a8"/><rect x="456.4" y="218.9" width="4" height="2" fill="#8c36a8"/><rect x="464.8" y="218.9" width="4" height="2" fill="#8c36a8"/><rect x="473.2" y="218.9" width="4" height="2" fill="#8c36a8"/><rect x="481.6" y="218.9" width="4" height="2" fill="#8c36a8"/><rect x="490.0" y="218.9" width="4" height="2" fill="#8c36a8"/><rect x="498.4" y="218.9" width="4" height="2" fill="#8c36a8"/><rect x="506.8" y="218.9" width="4" height="2" fill="#8c36a8"/><rect x="515.2" y="218.9" width="4" height="2" fill="#8c36a8"/><rect x="523.6" y="218.9" width="4" height="2" fill="#8c36a8"/><rect x="532.0" y="218.9" width="4" height="2" fill="#8c36a8"/><rect x="540.4" y="218.9" width="4" height="2" fill="#8c36a8"/><rect x="548.8" y="218.9" width="4" height="2" fill="#8c36a8"/><rect x="557.2" y="218.9" width="4" height="2" fill="#8c36a8"/><rect x="565.6" y="218.9" width="4" height="2" fill="#8c36a8"/><rect x="574.0" y="218.9" width="4" height="2" fill="#8c36a8"/><rect x="582.4" y="218.9" width="4" height="2" fill="#8c36a8"/><rect x="590.8" y="218.9" width="4" height="2" fill="#8c36a8"/><rect x="599.2" y="218.9" width="4" height="2" fill="#8c36a8"/><rect x="607.6" y="218.9" width="4" height="2" fill="#8c36a8"/><rect x="616.0" y="218.9" width="4" height="2" fill="#8c36a8"/><rect x="624.4" y="218.9" width="4" height="2" fill="#8c36a8"/><rect x="632.8" y="218.9" width="4" height="2" fill="#8c36a8"/><rect x="641.2" y="218.9" width="4" height="2" fill="#8c36a8"/><rect x="649.6" y="218.9" width="4" height="2" fill="#8c36a8"/><rect x="658.0" y="218.9" width="4" height="2" fill="#8c36a8"/><rect x="666.4" y="218.9" width="4" height="2" fill="#8c36a8"/><rect x="674.8" y="218.9" width="4" height="2" fill="#8c36a8"/><rect x="683.2" y="218.9" width="4" height="2" fill="#8c36a8"/><rect x="691.6" y="218.9" width="4" height="2" fill="#8c36a8"/><rect x="700.0" y="218.9" width="4" height="2" fill="#8c36a8"/><rect x="708.4" y="218.9" width="4" height="2" fill="#8c36a8"/><rect x="716.8" y="218.9" width="4" height="2" fill="#8c36a8"/><rect x="725.2" y="218.9" width="4" height="2" fill="#8c36a8"/><rect x="733.6" y="218.9" width="4" height="2" fill="#8c36a8"/><rect x="742.0" y="218.9" width="4" height="2" fill="#8c36a8"/><rect x="750.4" y="218.9" width="4" height="2" fill="#8c36a8"/><rect x="758.8" y="218.9" width="4" height="2" fill="#8c36a8"/><rect x="767.2" y="218.9" width="4" height="2" fill="#8c36a8"/><rect x="775.6" y="218.9" width="4" height="2" fill="#8c36a8"/><rect x="784.0" y="218.9" width="4" height="2" fill="#8c36a8"/><rect x="792.4" y="218.9" width="4" height="2" fill="#8c36a8"/><rect x="800.8" y="218.9" width="4" height="2" fill="#8c36a8"/><rect x="809.2" y="218.9" width="4" height="2" fill="#8c36a8"/><rect x="817.6" y="218.9" width="4" height="2" fill="#8c36a8"/><rect x="826.0" y="218.9" width="4" height="2" fill="#8c36a8"/><rect x="834.4" y="218.9" width="4" height="2" fill="#8c36a8"/><rect x="842.8" y="218.9" width="4" height="2" fill="#8c36a8"/><rect x="851.2" y="218.9" width="4" height="2" fill="#8c36a8"/><rect x="859.6" y="218.9" width="4" height="2" fill="#8c36a8"/><rect x="868.0" y="218.9" width="4" height="2" fill="#8c36a8"/><rect x="876.4" y="218.9" width="4" height="2" fill="#8c36a8"/><rect x="884.8" y="218.9" width="4" height="2" fill="#8c36a8"/><rect x="893.2" y="218.9" width="4" height="2" fill="#8c36a8"/><rect x="901.6" y="218.9" width="4" height="2" fill="#8c36a8"/><rect x="910.0" y="218.9" width="4" height="2" fill="#8c36a8"/><rect x="918.4" y="218.9" width="4" height="2" fill="#8c36a8"/><rect x="926.8" y="218.9" width="4" height="2" fill="#8c36a8"/><rect x="36.9" y="321" width="1.6" height="4.5" fill="#c8b0d8"/><rect x="48.9" y="321" width="1.6" height="4.5" fill="#c8b0d8"/><rect x="60.9" y="321" width="1.6" height="4.5" fill="#c8b0d8"/><rect x="72.9" y="321" width="1.6" height="4.5" fill="#c8b0d8"/><rect x="84.9" y="321" width="1.6" height="4.5" fill="#c8b0d8"/><rect x="96.9" y="321" width="1.6" height="4.5" fill="#c8b0d8"/><rect x="108.9" y="321" width="1.6" height="4.5" fill="#c8b0d8"/><rect x="120.9" y="321" width="1.6" height="4.5" fill="#c8b0d8"/><rect x="132.9" y="321" width="1.6" height="4.5" fill="#c8b0d8"/><rect x="144.9" y="321" width="1.6" height="4.5" fill="#c8b0d8"/><rect x="156.9" y="321" width="1.6" height="4.5" fill="#c8b0d8"/><rect x="168.9" y="321" width="1.6" height="4.5" fill="#c8b0d8"/><rect x="180.9" y="321" width="1.6" height="4.5" fill="#c8b0d8"/><rect x="192.9" y="321" width="1.6" height="4.5" fill="#c8b0d8"/><rect x="204.9" y="321" width="1.6" height="4.5" fill="#c8b0d8"/><rect x="216.9" y="321" width="1.6" height="4.5" fill="#c8b0d8"/><rect x="228.9" y="321" width="1.6" height="4.5" fill="#c8b0d8"/><rect x="240.9" y="321" width="1.6" height="4.5" fill="#c8b0d8"/><rect x="252.9" y="321" width="1.6" height="4.5" fill="#c8b0d8"/><rect x="264.9" y="321" width="1.6" height="4.5" fill="#c8b0d8"/><rect x="276.9" y="321" width="1.6" height="4.5" fill="#c8b0d8"/><rect x="288.9" y="321" width="1.6" height="4.5" fill="#c8b0d8"/><rect x="300.9" y="321" width="1.6" height="4.5" fill="#c8b0d8"/><rect x="312.9" y="321" width="1.6" height="4.5" fill="#c8b0d8"/><rect x="324.9" y="321" width="1.6" height="4.5" fill="#c8b0d8"/><rect x="336.9" y="321" width="1.6" height="4.5" fill="#c8b0d8"/><rect x="348.9" y="321" width="1.6" height="4.5" fill="#c8b0d8"/><rect x="360.9" y="321" width="1.6" height="4.5" fill="#c8b0d8"/><rect x="372.9" y="321" width="1.6" height="4.5" fill="#c8b0d8"/><rect x="384.9" y="321" width="1.6" height="4.5" fill="#c8b0d8"/><rect x="396.9" y="321" width="1.6" height="4.5" fill="#c8b0d8"/><rect x="408.9" y="321" width="1.6" height="4.5" fill="#c8b0d8"/><rect x="420.9" y="321" width="1.6" height="4.5" fill="#c8b0d8"/><rect x="432.9" y="321" width="1.6" height="4.5" fill="#c8b0d8"/><rect x="444.9" y="321" width="1.6" height="4.5" fill="#c8b0d8"/><rect x="456.9" y="321" width="1.6" height="4.5" fill="#c8b0d8"/><rect x="468.9" y="321" width="1.6" height="4.5" fill="#c8b0d8"/><rect x="480.9" y="321" width="1.6" height="4.5" fill="#c8b0d8"/><rect x="492.9" y="321" width="1.6" height="4.5" fill="#c8b0d8"/><rect x="504.9" y="321" width="1.6" height="4.5" fill="#c8b0d8"/><rect x="516.9" y="321" width="1.6" height="4.5" fill="#c8b0d8"/><rect x="528.9" y="321" width="1.6" height="4.5" fill="#c8b0d8"/><rect x="540.9" y="321" width="1.6" height="4.5" fill="#c8b0d8"/><rect x="552.9" y="321" width="1.6" height="4.5" fill="#c8b0d8"/><rect x="564.9" y="321" width="1.6" height="4.5" fill="#c8b0d8"/><rect x="576.9" y="321" width="1.6" height="4.5" fill="#c8b0d8"/><rect x="588.9" y="321" width="1.6" height="4.5" fill="#c8b0d8"/><rect x="600.9" y="321" width="1.6" height="4.5" fill="#c8b0d8"/><rect x="612.9" y="321" width="1.6" height="4.5" fill="#c8b0d8"/><rect x="624.9" y="321" width="1.6" height="4.5" fill="#c8b0d8"/><rect x="636.9" y="321" width="1.6" height="4.5" fill="#c8b0d8"/><rect x="648.9" y="321" width="1.6" height="4.5" fill="#c8b0d8"/><rect x="660.9" y="321" width="1.6" height="4.5" fill="#c8b0d8"/><rect x="672.9" y="321" width="1.6" height="4.5" fill="#c8b0d8"/><rect x="684.9" y="321" width="1.6" height="4.5" fill="#c8b0d8"/><rect x="696.9" y="321" width="1.6" height="4.5" fill="#c8b0d8"/><rect x="708.9" y="321" width="1.6" height="4.5" fill="#c8b0d8"/><rect x="720.9" y="321" width="1.6" height="4.5" fill="#c8b0d8"/><rect x="732.9" y="321" width="1.6" height="4.5" fill="#c8b0d8"/><rect x="744.9" y="321" width="1.6" height="4.5" fill="#c8b0d8"/><rect x="756.9" y="321" width="1.6" height="4.5" fill="#c8b0d8"/><rect x="768.9" y="321" width="1.6" height="4.5" fill="#c8b0d8"/><rect x="780.9" y="321" width="1.6" height="4.5" fill="#c8b0d8"/><rect x="792.9" y="321" width="1.6" height="4.5" fill="#c8b0d8"/><rect x="804.9" y="321" width="1.6" height="4.5" fill="#c8b0d8"/><rect x="816.9" y="321" width="1.6" height="4.5" fill="#c8b0d8"/><rect x="828.9" y="321" width="1.6" height="4.5" fill="#c8b0d8"/><rect x="840.9" y="321" width="1.6" height="4.5" fill="#c8b0d8"/><rect x="852.9" y="321" width="1.6" height="4.5" fill="#c8b0d8"/><rect x="864.9" y="321" width="1.6" height="4.5" fill="#c8b0d8"/><rect x="876.9" y="321" width="1.6" height="4.5" fill="#c8b0d8"/><rect x="888.9" y="321" width="1.6" height="4.5" fill="#c8b0d8"/><rect x="900.9" y="321" width="1.6" height="4.5" fill="#c8b0d8"/><rect x="912.9" y="321" width="1.6" height="4.5" fill="#c8b0d8"/><rect x="924.9" y="321" width="1.6" height="4.5" fill="#c8b0d8"/><rect x="180.9" y="317" width="1.6" height="13" fill="#e8e8e8"/><rect x="780.9" y="317" width="1.6" height="13" fill="#e8e8e8"/><rect x="26" y="321.6" width="908" height="2" fill="#4a0c5c"/><rect x="28.0" y="321.6" width="4" height="2" fill="#8c36a8"/><rect x="36.4" y="321.6" width="4" height="2" fill="#8c36a8"/><rect x="44.8" y="321.6" width="4" height="2" fill="#8c36a8"/><rect x="53.2" y="321.6" width="4" height="2" fill="#8c36a8"/><rect x="61.6" y="321.6" width="4" height="2" fill="#8c36a8"/><rect x="70.0" y="321.6" width="4" height="2" fill="#8c36a8"/><rect x="78.4" y="321.6" width="4" height="2" fill="#8c36a8"/><rect x="86.8" y="321.6" width="4" height="2" fill="#8c36a8"/><rect x="95.2" y="321.6" width="4" height="2" fill="#8c36a8"/><rect x="103.6" y="321.6" width="4" height="2" fill="#8c36a8"/><rect x="112.0" y="321.6" width="4" height="2" fill="#8c36a8"/><rect x="120.4" y="321.6" width="4" height="2" fill="#8c36a8"/><rect x="128.8" y="321.6" width="4" height="2" fill="#8c36a8"/><rect x="137.2" y="321.6" width="4" height="2" fill="#8c36a8"/><rect x="145.6" y="321.6" width="4" height="2" fill="#8c36a8"/><rect x="154.0" y="321.6" width="4" height="2" fill="#8c36a8"/><rect x="162.4" y="321.6" width="4" height="2" fill="#8c36a8"/><rect x="170.8" y="321.6" width="4" height="2" fill="#8c36a8"/><rect x="179.2" y="321.6" width="4" height="2" fill="#8c36a8"/><rect x="187.6" y="321.6" width="4" height="2" fill="#8c36a8"/><rect x="196.0" y="321.6" width="4" height="2" fill="#8c36a8"/><rect x="204.4" y="321.6" width="4" height="2" fill="#8c36a8"/><rect x="212.8" y="321.6" width="4" height="2" fill="#8c36a8"/><rect x="221.2" y="321.6" width="4" height="2" fill="#8c36a8"/><rect x="229.6" y="321.6" width="4" height="2" fill="#8c36a8"/><rect x="238.0" y="321.6" width="4" height="2" fill="#8c36a8"/><rect x="246.4" y="321.6" width="4" height="2" fill="#8c36a8"/><rect x="254.8" y="321.6" width="4" height="2" fill="#8c36a8"/><rect x="263.2" y="321.6" width="4" height="2" fill="#8c36a8"/><rect x="271.6" y="321.6" width="4" height="2" fill="#8c36a8"/><rect x="280.0" y="321.6" width="4" height="2" fill="#8c36a8"/><rect x="288.4" y="321.6" width="4" height="2" fill="#8c36a8"/><rect x="296.8" y="321.6" width="4" height="2" fill="#8c36a8"/><rect x="305.2" y="321.6" width="4" height="2" fill="#8c36a8"/><rect x="313.6" y="321.6" width="4" height="2" fill="#8c36a8"/><rect x="322.0" y="321.6" width="4" height="2" fill="#8c36a8"/><rect x="330.4" y="321.6" width="4" height="2" fill="#8c36a8"/><rect x="338.8" y="321.6" width="4" height="2" fill="#8c36a8"/><rect x="347.2" y="321.6" width="4" height="2" fill="#8c36a8"/><rect x="355.6" y="321.6" width="4" height="2" fill="#8c36a8"/><rect x="364.0" y="321.6" width="4" height="2" fill="#8c36a8"/><rect x="372.4" y="321.6" width="4" height="2" fill="#8c36a8"/><rect x="380.8" y="321.6" width="4" height="2" fill="#8c36a8"/><rect x="389.2" y="321.6" width="4" height="2" fill="#8c36a8"/><rect x="397.6" y="321.6" width="4" height="2" fill="#8c36a8"/><rect x="406.0" y="321.6" width="4" height="2" fill="#8c36a8"/><rect x="414.4" y="321.6" width="4" height="2" fill="#8c36a8"/><rect x="422.8" y="321.6" width="4" height="2" fill="#8c36a8"/><rect x="431.2" y="321.6" width="4" height="2" fill="#8c36a8"/><rect x="439.6" y="321.6" width="4" height="2" fill="#8c36a8"/><rect x="448.0" y="321.6" width="4" height="2" fill="#8c36a8"/><rect x="456.4" y="321.6" width="4" height="2" fill="#8c36a8"/><rect x="464.8" y="321.6" width="4" height="2" fill="#8c36a8"/><rect x="473.2" y="321.6" width="4" height="2" fill="#8c36a8"/><rect x="481.6" y="321.6" width="4" height="2" fill="#8c36a8"/><rect x="490.0" y="321.6" width="4" height="2" fill="#8c36a8"/><rect x="498.4" y="321.6" width="4" height="2" fill="#8c36a8"/><rect x="506.8" y="321.6" width="4" height="2" fill="#8c36a8"/><rect x="515.2" y="321.6" width="4" height="2" fill="#8c36a8"/><rect x="523.6" y="321.6" width="4" height="2" fill="#8c36a8"/><rect x="532.0" y="321.6" width="4" height="2" fill="#8c36a8"/><rect x="540.4" y="321.6" width="4" height="2" fill="#8c36a8"/><rect x="548.8" y="321.6" width="4" height="2" fill="#8c36a8"/><rect x="557.2" y="321.6" width="4" height="2" fill="#8c36a8"/><rect x="565.6" y="321.6" width="4" height="2" fill="#8c36a8"/><rect x="574.0" y="321.6" width="4" height="2" fill="#8c36a8"/><rect x="582.4" y="321.6" width="4" height="2" fill="#8c36a8"/><rect x="590.8" y="321.6" width="4" height="2" fill="#8c36a8"/><rect x="599.2" y="321.6" width="4" height="2" fill="#8c36a8"/><rect x="607.6" y="321.6" width="4" height="2" fill="#8c36a8"/><rect x="616.0" y="321.6" width="4" height="2" fill="#8c36a8"/><rect x="624.4" y="321.6" width="4" height="2" fill="#8c36a8"/><rect x="632.8" y="321.6" width="4" height="2" fill="#8c36a8"/><rect x="641.2" y="321.6" width="4" height="2" fill="#8c36a8"/><rect x="649.6" y="321.6" width="4" height="2" fill="#8c36a8"/><rect x="658.0" y="321.6" width="4" height="2" fill="#8c36a8"/><rect x="666.4" y="321.6" width="4" height="2" fill="#8c36a8"/><rect x="674.8" y="321.6" width="4" height="2" fill="#8c36a8"/><rect x="683.2" y="321.6" width="4" height="2" fill="#8c36a8"/><rect x="691.6" y="321.6" width="4" height="2" fill="#8c36a8"/><rect x="700.0" y="321.6" width="4" height="2" fill="#8c36a8"/><rect x="708.4" y="321.6" width="4" height="2" fill="#8c36a8"/><rect x="716.8" y="321.6" width="4" height="2" fill="#8c36a8"/><rect x="725.2" y="321.6" width="4" height="2" fill="#8c36a8"/><rect x="733.6" y="321.6" width="4" height="2" fill="#8c36a8"/><rect x="742.0" y="321.6" width="4" height="2" fill="#8c36a8"/><rect x="750.4" y="321.6" width="4" height="2" fill="#8c36a8"/><rect x="758.8" y="321.6" width="4" height="2" fill="#8c36a8"/><rect x="767.2" y="321.6" width="4" height="2" fill="#8c36a8"/><rect x="775.6" y="321.6" width="4" height="2" fill="#8c36a8"/><rect x="784.0" y="321.6" width="4" height="2" fill="#8c36a8"/><rect x="792.4" y="321.6" width="4" height="2" fill="#8c36a8"/><rect x="800.8" y="321.6" width="4" height="2" fill="#8c36a8"/><rect x="809.2" y="321.6" width="4" height="2" fill="#8c36a8"/><rect x="817.6" y="321.6" width="4" height="2" fill="#8c36a8"/><rect x="826.0" y="321.6" width="4" height="2" fill="#8c36a8"/><rect x="834.4" y="321.6" width="4" height="2" fill="#8c36a8"/><rect x="842.8" y="321.6" width="4" height="2" fill="#8c36a8"/><rect x="851.2" y="321.6" width="4" height="2" fill="#8c36a8"/><rect x="859.6" y="321.6" width="4" height="2" fill="#8c36a8"/><rect x="868.0" y="321.6" width="4" height="2" fill="#8c36a8"/><rect x="876.4" y="321.6" width="4" height="2" fill="#8c36a8"/><rect x="884.8" y="321.6" width="4" height="2" fill="#8c36a8"/><rect x="893.2" y="321.6" width="4" height="2" fill="#8c36a8"/><rect x="901.6" y="321.6" width="4" height="2" fill="#8c36a8"/><rect x="910.0" y="321.6" width="4" height="2" fill="#8c36a8"/><rect x="918.4" y="321.6" width="4" height="2" fill="#8c36a8"/><rect x="926.8" y="321.6" width="4" height="2" fill="#8c36a8"/><path d="M26.0,324.5 L27.2,324.5 L27.5,320.5 L28.1,324.5 L28.4,324.5 L28.7,328.0 L29.3,324.5 L29.6,324.5 L29.9,328.0 L30.5,324.5 L30.8,324.5 L31.1,328.0 L31.7,324.5 L32.0,324.5 L33.2,324.5 L33.5,327.5 L34.1,324.5 L34.4,324.5 L34.7,327.0 L35.3,324.5 L35.6,324.5 L36.8,324.5 L37.1,328.0 L37.7,324.5 L38.0,324.5 L38.3,322.0 L38.9,324.5 L39.2,324.5 L40.4,324.5 L41.6,324.5 L41.9,328.0 L42.5,324.5 L42.8,324.5 L44.0,324.5 L45.2,324.5 L45.5,327.0 L46.1,324.5 L46.4,324.5 L47.6,324.5 L47.9,322.0 L48.5,324.5 L48.8,324.5 L50.0,324.5 L51.2,324.5 L52.4,324.5 L52.7,328.0 L53.3,324.5 L53.6,324.5 L54.8,324.5 L56.0,324.5 L57.2,324.5 L57.5,327.0 L58.1,324.5 L58.4,324.5 L59.6,324.5 L60.8,324.5 L62.0,324.5 L63.2,324.5 L64.4,324.5 L65.6,324.5 L66.8,324.5 L68.0,324.5 L68.3,322.0 L68.9,324.5 L69.2,324.5 L69.5,327.5 L70.1,324.5 L70.4,324.5 L71.6,324.5 L72.8,324.5 L74.0,324.5 L75.2,324.5 L76.4,324.5 L76.7,327.5 L77.3,324.5 L77.6,324.5 L77.9,321.0 L78.5,324.5 L78.8,324.5 L79.1,321.0 L79.7,324.5 L80.0,324.5 L81.2,324.5 L82.4,324.5 L82.7,328.0 L83.3,324.5 L83.6,324.5 L84.8,324.5 L86.0,324.5 L87.2,324.5 L88.4,324.5 L89.6,324.5 L90.8,324.5 L92.0,324.5 L93.2,324.5 L94.4,324.5 L95.6,324.5 L96.8,324.5 L97.1,328.0 L97.7,324.5 L98.0,324.5 L99.2,324.5 L100.4,324.5 L101.6,324.5 L102.8,324.5 L104.0,324.5 L105.2,324.5 L106.4,324.5 L107.6,324.5 L108.8,324.5 L110.0,324.5 L111.2,324.5 L112.4,324.5 L113.6,324.5 L114.8,324.5 L116.0,324.5 L117.2,324.5 L118.4,324.5 L118.7,321.0 L119.3,324.5 L119.6,324.5 L120.8,324.5 L122.0,324.5 L123.2,324.5 L124.4,324.5 L125.6,324.5 L126.8,324.5 L128.0,324.5 L129.2,324.5 L130.4,324.5 L130.7,322.0 L131.3,324.5 L131.6,324.5 L131.9,320.5 L132.5,324.5 L132.8,324.5 L134.0,324.5 L135.2,324.5 L136.4,324.5 L137.6,324.5 L137.9,327.5 L138.5,324.5 L138.8,324.5 L140.0,324.5 L141.2,324.5 L142.4,324.5 L142.7,320.5 L143.3,324.5 L143.6,324.5 L144.8,324.5 L146.0,324.5 L147.2,324.5 L148.4,324.5 L149.6,324.5 L150.8,324.5 L152.0,324.5 L153.2,324.5 L154.4,324.5 L155.6,324.5 L156.8,324.5 L158.0,324.5 L158.3,322.0 L158.9,324.5 L159.2,324.5 L160.4,324.5 L160.7,328.0 L161.3,324.5 L161.6,324.5 L161.9,327.0 L162.5,324.5 L162.8,324.5 L164.0,324.5 L165.2,324.5 L166.4,324.5 L167.6,324.5 L167.9,327.0 L168.5,324.5 L168.8,324.5 L169.5,324.5" fill="none" stroke="#ecec10" stroke-width="1.5" stroke-linejoin="round"/><path d="M169.6,324.5 L169.6,250.0" fill="none" stroke="#e0e020" stroke-width="1.6" stroke-linejoin="round"/><path d="M169.6,250.0 L171.0,241.2 L172.2,241.2 L172.2,240.0 L173.4,240.0 L173.4,230.4 L174.6,230.4 L174.6,226.8 L175.8,226.8 L175.8,228.0 L177.0,228.0 L177.0,231.6 L178.2,231.6 L178.2,231.6 L179.4,231.6 L179.4,232.8 L180.6,232.8 L180.6,241.2 L181.8,241.2 L181.8,243.6 L183.0,243.6 L183.0,242.4 L184.2,242.4 L184.2,238.8 L185.4,238.8 L185.4,237.6 L186.6,237.6 L186.6,240.0 L187.8,240.0 L187.8,234.0 L189.0,234.0 L189.0,236.4 L190.2,236.4 L190.2,236.4 L191.4,236.4 L191.4,232.8 L192.6,232.8 L192.6,236.4 L193.8,236.4 L193.8,238.8 L195.0,238.8 L195.0,232.8 L196.2,232.8 L196.2,238.8 L197.4,238.8 L197.4,236.4 L198.6,236.4 L198.6,234.0 L199.8,234.0 L199.8,232.8 L201.0,232.8 L201.0,231.6 L202.2,231.6 L202.2,230.4 L203.4,230.4 L203.4,235.2 L204.6,235.2 L204.6,238.8 L205.8,238.8 L205.8,244.8 L207.0,244.8 L207.0,249.6 L208.2,249.6 L208.2,253.2 L209.4,253.2 L209.4,256.8 L210.6,256.8 L210.6,258.0 L211.8,258.0 L211.8,265.2 L213.0,265.2 L213.0,268.8 L214.2,268.8 L214.2,268.8 L215.4,268.8 L215.4,273.6 L216.6,273.6 L216.6,280.8 L217.8,280.8 L217.8,283.2 L219.0,283.2 L219.0,290.4 L220.2,290.4 L220.2,291.6 L221.4,291.6 L221.4,300.0 L222.6,300.0 L222.6,295.2 L223.8,295.2 L223.8,292.8 L225.0,292.8 L225.0,290.4 L226.2,290.4 L226.2,294.0 L227.4,294.0 L227.4,289.2 L228.6,289.2 L228.6,292.8 L229.8,292.8 L229.8,291.6 L231.0,291.6 L231.0,283.2 L232.2,283.2 L232.2,286.8 L233.4,286.8 L233.4,283.2 L234.6,283.2 L234.6,285.6 L235.8,285.6 L235.8,279.6 L237.0,279.6 L237.0,285.6 L238.2,285.6 L238.2,279.6 L239.4,279.6 L239.4,285.6 L240.6,285.6 L240.6,280.8 L241.8,280.8 L241.8,283.2 L243.0,283.2 L243.0,282.0 L244.2,282.0 L244.2,280.8 L245.4,280.8 L245.4,282.0 L246.6,282.0 L246.6,282.0 L247.8,282.0 L247.8,278.4 L249.0,278.4 L249.0,278.4 L250.2,278.4 L250.2,282.0 L251.4,282.0 L251.4,278.4 L252.6,278.4 L252.6,283.2 L253.8,283.2 L253.8,277.2 L255.0,277.2 L255.0,283.2 L256.2,283.2 L256.2,280.8 L257.4,280.8 L257.4,277.2 L258.6,277.2 L258.6,284.4 L259.8,284.4 L259.8,283.2 L261.0,283.2 L261.0,286.8 L262.2,286.8 L262.2,283.2 L263.4,283.2 L263.4,285.6 L264.6,285.6 L264.6,280.8 L265.8,280.8 L265.8,282.0 L267.0,282.0 L267.0,280.8 L268.2,280.8 L268.2,274.8 L269.4,274.8 L269.4,277.2 L270.6,277.2 L270.6,278.4 L271.8,278.4 L271.8,285.6 L273.0,285.6 L273.0,286.8 L274.2,286.8 L274.2,283.2 L275.4,283.2 L275.4,284.4 L276.6,284.4 L276.6,282.0 L277.8,282.0 L277.8,278.4 L279.0,278.4 L279.0,282.0 L280.2,282.0 L280.2,278.4 L281.4,278.4 L281.4,282.0 L282.6,282.0 L282.6,277.2 L283.8,277.2 L283.8,282.0 L285.0,282.0 L285.0,279.6 L286.2,279.6 L286.2,285.6 L287.4,285.6 L287.4,283.2 L288.6,283.2 L288.6,286.8 L289.8,286.8 L289.8,286.8 L291.0,286.8 L291.0,288.0 L292.2,288.0 L292.2,291.6 L293.4,291.6 L293.4,294.0 L294.6,294.0 L294.6,298.8 L295.8,298.8 L295.8,302.4 L297.0,302.4 L297.0,300.0 L298.2,300.0 L298.2,290.4 L299.4,290.4 L299.4,285.6 L300.6,285.6 L300.6,285.6 L301.8,285.6 L301.8,276.0 L303.0,276.0 L303.0,274.8 L304.2,274.8 L304.2,264.0 L305.4,264.0 L305.4,261.6 L306.6,261.6 L306.6,264.0 L307.8,264.0 L307.8,261.6 L309.0,261.6 L309.0,264.0 L310.2,264.0 L310.2,265.2 L311.4,265.2 L311.4,267.6 L312.6,267.6 L312.6,264.0 L313.8,264.0 L313.8,267.6 L315.0,267.6 L315.0,261.6 L316.2,261.6 L316.2,264.0 L317.4,264.0 L317.4,259.2 L318.6,259.2 L318.6,262.8 L319.8,262.8 L319.8,258.0 L321.0,258.0 L321.0,264.0 L322.2,264.0 L322.2,264.0 L323.4,264.0 L323.4,258.0 L324.6,258.0 L324.6,264.0 L325.8,264.0 L325.8,266.4 L327.0,266.4 L327.0,267.6 L328.2,267.6 L328.2,278.4 L329.4,278.4 L329.4,280.8 L330.6,280.8 L330.6,283.2 L331.8,283.2 L331.8,282.0 L333.0,282.0 L333.0,286.8 L334.2,286.8 L334.2,282.0 L335.4,282.0 L335.4,280.8 L336.6,280.8 L336.6,279.6 L337.8,279.6 L337.8,283.2 L339.0,283.2 L339.0,282.0 L340.2,282.0 L340.2,278.4 L341.4,278.4 L341.4,283.2 L342.6,283.2 L342.6,283.2 L343.8,283.2 L343.8,282.0 L345.0,282.0 L345.0,282.0 L346.2,282.0 L346.2,289.2 L347.4,289.2 L347.4,283.2 L348.6,283.2 L348.6,282.0 L349.8,282.0 L349.8,284.4 L351.0,284.4 L351.0,283.2 L352.2,283.2 L352.2,279.6 L353.4,279.6 L353.4,279.6 L354.6,279.6 L354.6,283.2 L355.8,283.2 L355.8,278.4 L357.0,278.4 L357.0,277.2 L358.2,277.2 L358.2,276.0 L359.4,276.0 L359.4,280.8 L360.6,280.8 L360.6,279.6 L361.8,279.6 L361.8,283.2 L363.0,283.2 L363.0,283.2 L364.2,283.2 L364.2,279.6 L365.4,279.6 L365.4,280.8 L366.6,280.8 L366.6,277.2 L367.8,277.2 L367.8,277.2 L369.0,277.2 L369.0,278.4 L370.2,278.4 L370.2,279.6 L371.4,279.6 L371.4,277.2 L372.6,277.2 L372.6,276.0 L373.8,276.0 L373.8,280.8 L375.0,280.8 L375.0,283.2 L376.2,283.2 L376.2,282.0 L377.4,282.0 L377.4,288.0 L378.6,288.0 L378.0,283.2 L379.2,283.2 L379.2,291.6 L380.4,291.6 L380.4,288.0 L381.6,288.0 L381.6,291.6 L382.8,291.6 L382.8,285.6 L384.0,285.6 L384.0,290.4 L385.2,290.4 L385.2,286.8 L386.4,286.8 L386.4,290.4 L387.6,290.4 L387.6,284.4 L388.8,284.4 L388.8,286.8 L390.0,286.8 L390.0,294.0 L391.2,294.0 L391.2,288.0 L392.4,288.0 L392.4,291.6 L393.6,291.6 L393.6,284.4 L394.8,284.4 L394.8,290.4 L396.0,290.4 L396.0,286.8 L397.2,286.8 L397.2,291.6 L398.4,291.6 L398.4,290.4 L399.6,290.4 L399.6,286.8 L400.8,286.8 L400.8,294.0 L402.0,294.0 L402.0,288.0 L403.2,288.0 L403.2,294.0 L404.4,294.0 L404.4,286.8 L405.6,286.8 L405.6,290.4 L406.8,290.4 L406.8,284.4 L408.0,284.4 L408.0,294.0 L409.2,294.0 L409.2,288.0 L410.4,288.0 L410.4,290.4 L411.6,290.4 L411.6,288.0 L412.8,288.0 L412.8,290.4 L414.0,290.4 L414.0,284.4 L415.2,284.4 L415.2,288.0 L416.4,288.0 L416.4,284.4 L417.6,284.4 L417.6,291.6 L418.8,291.6 L418.8,290.4 L420.0,290.4 L420.0,289.2 L421.2,289.2 L421.2,292.8 L422.4,292.8 L422.4,286.8 L423.6,286.8 L423.6,292.8 L424.8,292.8 L424.8,286.8 L426.0,286.8 L426.0,291.6 L427.2,291.6 L427.2,288.0 L428.4,288.0 L428.4,294.0 L429.6,294.0 L429.6,290.4 L430.8,290.4 L430.8,284.4 L432.0,284.4 L432.0,291.6 L433.2,291.6 L433.2,284.4 L434.4,284.4 L434.4,285.6 L435.6,285.6 L435.6,292.8 L436.8,292.8 L436.8,286.8 L438.0,286.8 L438.0,291.6 L439.2,291.6 L439.2,289.2 L440.4,289.2 L440.4,291.6 L441.6,291.6 L441.6,295.2 L442.8,295.2 L442.8,289.2 L444.0,289.2 L444.0,292.8 L445.2,292.8 L445.2,285.6 L446.4,285.6 L446.4,294.0 L447.6,294.0 L447.6,285.6 L448.8,285.6 L448.8,291.6 L450.0,291.6 L450.0,288.0 L451.2,288.0 L451.2,294.0 L452.4,294.0 L452.4,286.8 L453.6,286.8 L453.6,291.6 L454.8,291.6 L454.8,285.6 L456.0,285.6 L456.0,294.0 L457.2,294.0 L457.2,290.4 L458.4,290.4 L458.4,288.0 L459.6,288.0 L459.6,295.2 L460.8,295.2 L460.8,292.8 L462.0,292.8 L462.0,285.6 L463.2,285.6 L463.2,292.8 L464.4,292.8 L464.4,288.0 L465.6,288.0 L465.6,291.6 L466.8,291.6 L466.8,288.0 L468.0,288.0 L468.0,290.4 L469.2,290.4 L469.2,284.4 L470.4,284.4 L470.4,289.2 L471.6,289.2 L471.6,284.4 L472.8,284.4 L472.8,291.6 L474.0,291.6 L474.0,285.6 L475.2,285.6 L475.2,291.6 L476.4,291.6 L476.4,283.2 L477.6,283.2 L477.6,290.4 L478.8,290.4 L478.8,288.0 L480.0,288.0 L480.0,294.0 L481.2,294.0 L481.2,291.6 L482.4,291.6 L482.4,285.6 L483.6,285.6 L483.6,288.0 L484.8,288.0 L484.8,291.6 L486.0,291.6 L486.0,285.6 L487.2,285.6 L487.2,291.6 L488.4,291.6 L488.4,291.6 L489.6,291.6 L489.6,294.0 L490.8,294.0 L490.8,285.6 L492.0,285.6 L492.0,286.8 L493.2,286.8 L493.2,295.2 L494.4,295.2 L494.4,288.0 L495.6,288.0 L495.6,294.0 L496.8,294.0 L496.8,290.4 L498.0,290.4 L498.0,296.4 L499.2,296.4 L499.2,289.2 L500.4,289.2 L500.4,297.6 L501.6,297.6 L501.6,289.2 L502.8,289.2 L502.8,295.2 L504.0,295.2 L504.0,289.2 L505.2,289.2 L505.2,292.8 L506.4,292.8 L506.4,291.6 L507.6,291.6 L507.6,295.2 L508.8,295.2 L508.8,290.4 L510.0,290.4 L510.0,291.6 L511.2,291.6 L511.2,288.0 L512.4,288.0 L512.4,291.6 L513.6,291.6 L513.6,288.0 L514.8,288.0 L514.8,294.0 L516.0,294.0 L516.0,292.8 L517.2,292.8 L517.2,290.4 L518.4,290.4 L518.4,284.4 L519.6,284.4 L519.6,294.0 L520.8,294.0 L520.8,288.0 L522.0,288.0 L522.0,294.0 L523.2,294.0 L523.2,290.4 L524.4,290.4 L524.4,290.4 L525.6,290.4 L525.6,286.8 L526.8,286.8 L526.8,290.4 L528.0,290.4 L528.0,284.4 L529.2,284.4 L529.2,290.4 L530.4,290.4 L530.4,286.8 L531.6,286.8 L531.6,292.8 L532.8,292.8 L532.8,284.4 L534.0,284.4 L534.0,294.0 L535.2,294.0 L535.2,292.8 L536.4,292.8 L536.4,286.8 L537.6,286.8 L537.6,290.4 L538.8,290.4 L538.8,286.8 L540.0,286.8 L540.0,294.0 L541.2,294.0 L541.2,290.4 L542.4,290.4 L542.4,292.8 L543.6,292.8 L543.6,292.8 L544.8,292.8 L544.8,291.6 L546.0,291.6 L546.0,292.8 L547.2,292.8 L547.2,289.2 L548.4,289.2 L548.4,296.4 L549.6,296.4 L549.6,289.2 L550.8,289.2 L550.8,295.2 L552.0,295.2 L552.0,300.0 L553.2,300.0 L553.2,295.2 L554.4,295.2 L554.4,297.6 L555.6,297.6 L555.6,290.4 L556.8,290.4 L556.8,300.0 L558.0,300.0 L558.0,292.8 L559.2,292.8 L559.2,298.8 L560.4,298.8 L560.4,290.4 L561.6,290.4 L561.6,297.6 L562.8,297.6 L562.8,290.4 L564.0,290.4 L564.0,296.4 L565.2,296.4 L565.2,298.8 L566.4,298.8 L566.4,290.4 L567.6,290.4 L567.6,298.8 L568.8,298.8 L568.8,294.0 L570.0,294.0 L570.0,296.4 L571.2,296.4 L571.2,290.4 L572.4,290.4 L572.4,298.8 L573.6,298.8 L573.6,292.8 L574.8,292.8 L574.8,300.0 L576.0,300.0 L576.0,295.2 L577.2,295.2 L577.2,290.4 L578.4,290.4 L578.4,297.6 L579.6,297.6 L579.6,294.0 L580.8,294.0 L580.8,300.0 L582.0,300.0 L582.0,298.8 L583.2,298.8 L583.2,292.8 L584.4,292.8 L584.4,298.8 L585.6,298.8 L585.6,291.6 L586.8,291.6 L586.8,292.8 L588.0,292.8 L588.0,297.6 L589.2,297.6 L589.2,291.6 L590.4,291.6 L590.4,294.0 L591.6,294.0 L591.6,290.4 L592.8,290.4 L592.8,295.2 L594.0,295.2 L594.0,291.6 L595.2,291.6 L595.2,296.4 L596.4,296.4 L596.4,289.2 L597.6,289.2 L597.6,285.6 L598.8,285.6 L598.8,285.6 L600.0,285.6 L600.0,289.2 L601.2,289.2 L601.2,286.8 L602.4,286.8 L602.4,290.4 L603.6,290.4 L603.6,285.6 L604.8,285.6 L604.8,285.6 L606.0,285.6 L606.0,289.2 L607.2,289.2 L607.2,284.4 L608.4,284.4 L608.4,291.6 L609.6,291.6 L609.6,289.2 L610.8,289.2 L610.8,288.0 L612.0,288.0 L612.0,292.8 L613.2,292.8 L613.2,285.6 L614.4,285.6 L614.4,291.6 L615.6,291.6 L615.6,290.4 L616.8,290.4 L616.8,288.0 L618.0,288.0 L618.0,292.8 L619.2,292.8 L619.2,289.2 L620.4,289.2 L620.4,298.8 L621.6,298.8 L621.6,294.0 L622.8,294.0 L622.8,302.4 L624.0,302.4 L624.0,295.2 L625.2,295.2 L625.2,298.8 L626.4,298.8 L626.4,295.2 L627.6,295.2 L627.6,301.2 L628.8,301.2 L628.8,295.2 L630.0,295.2 L630.0,292.8 L631.2,292.8 L631.2,298.8 L632.4,298.8 L632.4,296.4 L633.6,296.4 L633.6,295.2 L634.8,295.2 L634.8,300.0 L636.0,300.0 L636.0,295.2 L637.2,295.2 L637.2,298.8 L638.4,298.8 L638.4,294.0 L639.6,294.0 L639.6,297.6 L640.8,297.6 L640.8,294.0 L642.0,294.0 L642.0,300.0 L643.2,300.0 L643.2,292.8 L644.4,292.8 L644.4,298.8 L645.6,298.8 L645.6,291.6 L646.8,291.6 L646.8,300.0 L648.0,300.0 L648.0,292.8 L649.2,292.8 L649.2,301.2 L650.4,301.2 L650.4,292.8 L651.6,292.8 L651.6,300.0 L652.8,300.0 L652.8,294.0 L654.0,294.0 L654.0,301.2 L655.2,301.2 L655.2,295.2 L656.4,295.2 L656.4,302.4 L657.6,302.4 L657.6,296.4 L658.8,296.4 L658.8,301.2 L660.0,301.2 L660.0,294.0 L661.2,294.0 L661.2,302.4 L662.4,302.4 L662.4,292.8 L663.6,292.8 L663.6,298.8 L664.8,298.8 L664.8,300.0 L666.0,300.0 L666.0,294.0 L667.2,294.0 L667.2,301.2 L668.4,301.2 L668.4,295.2 L669.6,295.2 L669.6,302.4 L670.8,302.4 L670.8,297.6 L672.0,297.6 L672.0,300.0 L673.2,300.0 L673.2,297.6 L674.4,297.6 L674.4,302.4 L675.6,302.4 L675.6,296.4 L676.8,296.4 L676.8,295.2 L678.0,295.2 L678.0,296.4 L679.2,296.4 L679.2,302.4 L680.4,302.4 L680.4,295.2 L681.6,295.2 L681.6,303.6 L682.8,303.6 L682.8,294.0 L684.0,294.0 L684.0,300.0 L685.2,300.0 L685.2,294.0 L686.4,294.0 L686.4,296.4 L687.6,296.4 L687.6,301.2 L688.8,301.2 L688.8,292.8 L690.0,292.8 L690.0,296.4 L691.2,296.4 L691.2,290.4 L692.4,290.4 L692.4,296.4 L693.6,296.4 L693.6,286.8 L694.8,286.8 L694.8,291.6 L696.0,291.6 L696.0,291.6 L697.2,291.6 L697.2,288.0 L698.4,288.0 L698.4,292.8 L699.6,292.8 L699.6,290.4 L700.8,290.4 L700.8,289.2 L702.0,289.2 L702.0,290.4 L703.2,290.4 L703.2,300.0 L704.4,300.0 L704.4,297.6 L705.6,297.6 L705.6,292.8 L706.8,292.8 L706.8,294.0 L708.0,294.0 L708.0,297.6 L709.2,297.6 L709.2,294.0 L710.4,294.0 L710.4,298.8 L711.6,298.8 L711.6,296.4 L712.8,296.4 L712.8,294.0 L714.0,294.0 L714.0,295.2 L715.2,295.2 L715.2,296.4 L716.4,296.4 L716.4,297.6 L717.6,297.6 L717.6,292.8 L718.8,292.8 L718.8,294.0 L720.0,294.0 L720.0,296.4 L721.2,296.4 L721.2,298.8 L722.4,298.8 L722.4,295.2 L723.6,295.2 L723.6,298.8 L724.8,298.8 L724.8,295.2 L726.0,295.2 L726.0,302.4 L727.2,302.4 L727.2,296.4 L728.4,296.4 L728.4,294.0 L729.6,294.0 L729.6,300.0 L730.8,300.0 L730.8,295.2 L732.0,295.2 L732.0,302.4 L733.2,302.4 L733.2,297.6 L734.4,297.6 L734.4,300.0 L735.6,300.0 L735.6,295.2 L736.8,295.2 L736.8,295.2 L738.0,295.2 L738.0,302.4 L739.2,302.4 L739.2,297.6 L740.4,297.6 L740.4,302.4 L741.6,302.4 L741.6,297.6 L742.8,297.6 L742.8,295.2 L744.0,295.2 L744.0,294.0 L745.2,294.0 L745.2,300.0 L746.4,300.0 L746.4,295.2 L747.6,295.2 L747.6,297.6 L748.8,297.6 L748.8,300.0 L750.0,300.0 L750.0,294.0 L751.2,294.0 L751.2,301.2 L752.4,301.2 L752.4,303.6 L753.6,303.6 L753.6,297.6 L754.8,297.6 L754.8,300.0 L756.0,300.0 L756.0,294.0 L757.2,294.0 L757.2,296.4 L758.4,296.4 L758.4,298.8 L759.6,298.8 L759.6,294.0 L760.8,294.0 L760.8,302.4 L762.0,302.4 L762.0,302.4 L763.2,302.4 L763.2,294.0 L764.4,294.0 L764.4,296.4 L765.6,296.4 L765.6,298.8 L766.8,298.8 L766.8,294.0 L768.0,294.0 L768.0,302.4 L769.2,302.4 L769.2,301.2 L770.4,301.2 L770.4,296.4 L771.6,296.4 L771.6,301.2 L772.8,301.2 L772.8,297.6 L774.0,297.6 L774.0,303.6 L775.2,303.6 L775.2,304.8 L776.4,304.8 L776.4,300.0 L777.6,300.0 L777.6,306.0 L778.8,306.0 L778.8,296.4 L780.0,296.4 L780.0,303.6 L781.2,303.6 L781.2,303.6 L782.4,303.6 L782.4,297.6 L783.6,297.6 L783.6,301.2 L784.8,301.2 L784.8,294.0 L786.0,294.0 L786.0,294.0 L787.2,294.0 L787.2,289.2 L788.4,289.2 L788.4,296.4 L789.6,296.4 L789.0,290.5" fill="none" stroke="#f4f000" stroke-width="2.2" stroke-linejoin="round"/><path d="M789.0,290.5 L789.0,324.5" fill="none" stroke="#e0e020" stroke-width="1.6" stroke-linejoin="round"/><path d="M789.0,324.5 L790.2,324.5 L791.4,324.5 L792.6,324.5 L793.8,324.5 L794.1,328.0 L794.7,324.5 L795.0,324.5 L796.2,324.5 L797.4,324.5 L798.6,324.5 L799.8,324.5 L801.0,324.5 L802.2,324.5 L802.5,327.5 L803.1,324.5 L803.4,324.5 L804.6,324.5 L805.8,324.5 L807.0,324.5 L808.2,324.5 L809.4,324.5 L810.6,324.5 L810.9,327.5 L811.5,324.5 L811.8,324.5 L813.0,324.5 L814.2,324.5 L815.4,324.5 L816.6,324.5 L817.8,324.5 L819.0,324.5 L820.2,324.5 L821.4,324.5 L821.7,322.0 L822.3,324.5 L822.6,324.5 L822.9,328.0 L823.5,324.5 L823.8,324.5 L825.0,324.5 L826.2,324.5 L827.4,324.5 L828.6,324.5 L829.8,324.5 L831.0,324.5 L832.2,324.5 L833.4,324.5 L834.6,324.5 L835.8,324.5 L837.0,324.5 L837.3,327.5 L837.9,324.5 L838.2,324.5 L839.4,324.5 L840.6,324.5 L841.8,324.5 L842.1,327.0 L842.7,324.5 L843.0,324.5 L844.2,324.5 L845.4,324.5 L846.6,324.5 L847.8,324.5 L849.0,324.5 L850.2,324.5 L851.4,324.5 L851.7,327.5 L852.3,324.5 L852.6,324.5 L853.8,324.5 L855.0,324.5 L856.2,324.5 L857.4,324.5 L857.7,327.0 L858.3,324.5 L858.6,324.5 L859.8,324.5 L861.0,324.5 L861.3,327.0 L861.9,324.5 L862.2,324.5 L863.4,324.5 L864.6,324.5 L865.8,324.5 L867.0,324.5 L868.2,324.5 L868.5,328.0 L869.1,324.5 L869.4,324.5 L870.6,324.5 L871.8,324.5 L873.0,324.5 L873.3,327.5 L873.9,324.5 L874.2,324.5 L875.4,324.5 L876.6,324.5 L877.8,324.5 L879.0,324.5 L880.2,324.5 L881.4,324.5 L881.7,322.0 L882.3,324.5 L882.6,324.5 L883.8,324.5 L885.0,324.5 L885.3,327.5 L885.9,324.5 L886.2,324.5 L887.4,324.5 L887.7,328.0 L888.3,324.5 L888.6,324.5 L889.8,324.5 L891.0,324.5 L891.3,328.0 L891.9,324.5 L892.2,324.5 L893.4,324.5 L894.6,324.5 L895.8,324.5 L896.1,327.0 L896.7,324.5 L897.0,324.5 L898.2,324.5 L898.5,327.0 L899.1,324.5 L899.4,324.5 L900.6,324.5 L901.8,324.5 L903.0,324.5 L904.2,324.5 L904.5,327.5 L905.1,324.5 L905.4,324.5 L906.6,324.5 L907.8,324.5 L909.0,324.5 L910.2,324.5 L911.4,324.5 L912.6,324.5 L913.8,324.5 L915.0,324.5 L916.2,324.5 L917.4,324.5 L918.6,324.5 L918.9,322.0 L919.5,324.5 L919.8,324.5 L920.1,328.0 L920.7,324.5 L921.0,324.5 L922.2,324.5 L923.4,324.5 L923.7,321.0 L924.3,324.5 L924.6,324.5 L925.8,324.5 L927.0,324.5 L928.2,324.5 L928.5,327.0 L929.1,324.5 L929.4,324.5 L930.6,324.5 L931.8,324.5 L933.0,324.5 L934.0,324.5" fill="none" stroke="#ecec10" stroke-width="1.5" stroke-linejoin="round"/><path d="M1,314 L17,314 L23,324 L17,334 L1,334 Z" fill="#000" stroke="#e8e800" stroke-width="1.6"/><text x="5" y="331" font-family="Liberation Mono" font-size="19" fill="#e8e800">2</text><rect x="0" y="0" width="960" height="1.2" fill="#061838"/></svg>
<div class="a" style="left:28px;top:5px;color:#0a1e5a;-webkit-text-stroke:0.45px #0a1e5a">AKTAKOM</div>
<div class="pill" style="left:144px;top:1px;width:96px;height:21px;background:#e8141a;border-radius:11px"></div>
<div class="a tr" style="left:168px;top:4px;color:#600808">Stop</div>
<div class="pill" style="left:300px;top:1px;width:361px;height:22px;border-radius:11px"></div>
<div class="a" style="left:312px;top:10.2px;width:337px;height:1.6px;background:#b8b828"></div>
<div class="a" style="left:353px;top:3px;width:2px;height:19px;background:#b0b0b0"></div>
<div class="a" style="left:353px;top:3px;width:4px;height:2px;background:#b0b0b0"></div>
<div class="a" style="left:353px;top:20px;width:4px;height:2px;background:#b0b0b0"></div>
<div class="a" style="left:605px;top:3px;width:2px;height:19px;background:#b0b0b0"></div>
<div class="a" style="left:603px;top:3px;width:4px;height:2px;background:#b0b0b0"></div>
<div class="a" style="left:603px;top:20px;width:4px;height:2px;background:#b0b0b0"></div>
<div class="a" style="left:436px;top:2px;width:7px;height:3px;background:#e020e0"></div>
<div class="a" style="left:439px;top:4px;width:2px;height:4px;background:#e020e0"></div>
<div class="pill" style="left:672px;top:1px;width:130px;height:21px"></div>
<svg class="a" style="left:675px;top:3px" width="18" height="19" viewBox="0 0 18 19"><path d="M2,1.5 H16 V13 L9,17.5 L2,13 Z" fill="#0c0414" stroke="#9a22cc" stroke-width="2"/><path d="M5.5,5 H12.5 M9,5 V14" stroke="#c060f0" stroke-width="2" fill="none"/></svg>
<div class="a t" style="left:694px;top:4px;color:#f0f0f0">2.400s</div>
<div class="pill" style="left:820px;top:1px;width:72px;height:21px"></div>
<div class="a t" style="left:830px;top:4px;color:#f0f0f0">7:26</div>
<svg class="a" style="left:904px;top:2px" width="20" height="20" viewBox="0 0 20 20"><path d="M6,12.5 L15,8 L17.5,13 L8.5,17.5 Z" fill="#3a5a98" stroke="#d0a0b8" stroke-width="1.2"/><path d="M3,4 Q5,1.5 8,2 L12,2.5 L11,6 L8,9 L6,12 L4.5,9 Z" fill="#38c030"/><path d="M4,5 L7,4 L6,9 Z" fill="#70e060"/></svg>

<!-- bottom left panel -->
<div class="a" style="left:0;top:623px;width:384px;height:97px;background:#66b4c8"></div>
<div class="a" style="left:2px;top:624px;width:248.5px;height:23px;background:#000;border-radius:5px"></div>
<div class="a" style="left:2px;top:647.5px;width:248.5px;height:23px;background:#000;border-radius:5px;box-shadow:0 -1px 0 #2a6a80"></div>
<div class="a" style="left:253.5px;top:624px;width:126.5px;height:46.5px;background:#000;border-radius:5px"></div>
<div class="a" style="left:1px;top:673.3px;width:379px;height:43.5px;background:#000;border-radius:5px"></div>
<div class="pill" style="left:383px;top:623px;width:119px;height:22px"></div>
<div class="a t" style="left:406px;top:627px;color:#f0f0f0">M:1.0s</div>
<div class="a" style="left:383px;top:646px;width:575px;height:72px;background:#0262a2;box-shadow:inset 3px 0 0 #004c9a"></div>
<div class="a" style="left:387px;top:649px;width:108px;height:67px;background:#0080e0;border-radius:3px;box-shadow:inset 2px 2px 0 #50a8f4, inset -3px -2px 0 #0a3a98"></div>
<div class="a" style="left:717px;top:649px;width:107px;height:67px;background:#0080e0;border-radius:3px;box-shadow:inset 2px 2px 0 #50a8f4, inset -3px -2px 0 #0a3a98"></div>
<div class="a tb" style="left:415px;top:660px;color:#0a1e5a">Type</div>
<div class="a" style="left:409px;top:685px;width:60px;height:24px;background:#e8e8e8"></div>
<div class="a tg" style="left:409px;top:688px;color:#000">Image</div>
<div class="a tb" style="left:745px;top:674px;color:#0a1e5a">Save</div>
<div class="pill" style="left:797px;top:624px;width:155px;height:20px;border-radius:10px"></div>
<div class="a circ" style="left:801px;top:626px;width:19px;height:18px;background:#e81010;color:#000;font-size:16px;line-height:19px;text-align:center;border-radius:50%">1</div>
<svg class="a" style="left:822px;top:626px" width="24" height="18" viewBox="0 0 24 18"><path d="M1,15.5 H9 L14,2 H23" fill="none" stroke="#f0f0f0" stroke-width="1.8"/></svg>
<div class="a t" style="left:848px;top:628px;color:#f0f0f0">0.00mV</div>

<div class="a" style="left:3px;top:627px;width:19px;height:19px;background:#e81010;color:#000;font-size:17px;line-height:20px;text-align:center;border-radius:50%">1</div>
<div class="a t" style="left:21px;top:629px;color:#e02424">5V-</div>
<div class="a t" style="left:127px;top:629px;color:#e02424">0.00div</div>
<div class="a" style="left:3px;top:651px;width:19px;height:19px;background:#e8e020;color:#000;font-size:17px;line-height:20px;text-align:center;border-radius:50%">2</div>
<div class="a t" style="left:21px;top:653px;color:#e4e43c">2V-</div>
<div class="a t" style="left:127px;top:653px;color:#e4e43c">0.00div</div>
<div class="a t" style="left:270px;top:628px;color:#e8e8e8">(500S/s)</div>
<div class="a t" style="left:261px;top:651px;color:#e8e8e8">Depth:10K</div>

<div class="a" style="left:2px;top:675px;width:19px;height:19px;background:#e8e020;color:#000;font-size:17px;line-height:20px;text-align:center;border-radius:50%">2</div>
<div class="a t" style="left:25px;top:676px;color:#e4e43c">F:  ?</div>
<div class="a" style="left:2px;top:697px;width:19px;height:19px;background:#e8e020;color:#000;font-size:17px;line-height:20px;text-align:center;border-radius:50%">2</div>
<div class="a t" style="left:25px;top:699px;color:#e4e43c">+D:8.2%</div>
<div class="a" style="left:192px;top:675px;width:19px;height:19px;background:#e8e020;color:#000;font-size:17px;line-height:20px;text-align:center;border-radius:50%">2</div>
<div class="a t" style="left:215px;top:676px;color:#e4e43c">Vk:1.108v</div>
<div class="a" style="left:192px;top:697px;width:19px;height:19px;background:#e8e020;color:#000;font-size:17px;line-height:20px;text-align:center;border-radius:50%">2</div>
<div class="a t" style="left:215px;top:699px;color:#e4e43c">V:846.4mv</div>

<!-- info box -->
<div class="a" style="left:30px;top:539px;width:222px;height:80px;background:#000;border:2px solid #92b8d0;border-radius:3px 4px 4px 3px;border-bottom-width:3px"></div>
<div class="a" style="left:33px;top:542px;width:19px;height:19px;background:#e8e020;color:#000;font-size:16px;line-height:19px;text-align:center;border-radius:50%">2</div>
<svg class="a" style="left:52px;top:550px" width="12" height="10" viewBox="0 0 12 10"><path d="M1.2,7.6 L6,1.5 L10.8,7.6 Z" fill="none" stroke="#e0e0e0" stroke-width="1.2"/></svg>
<div class="a t" style="left:63px;top:545px;color:#e8e8e8">y:3.44v</div>
<div class="a t" style="left:51px;top:572px;color:#e8e8e8">y1:3.44v</div>
<div class="a t" style="left:51px;top:597px;color:#e8e8e8">y2:0.0mv</div>

</body></html>
